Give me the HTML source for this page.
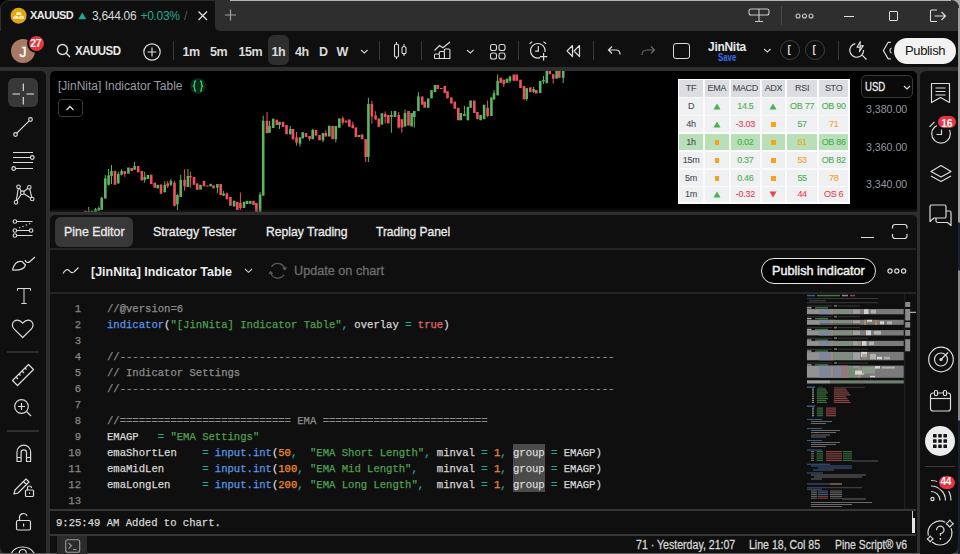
<!DOCTYPE html>
<html><head><meta charset="utf-8">
<style>
*{margin:0;padding:0;box-sizing:border-box}
html,body{width:960px;height:554px;overflow:hidden;background:#2e2e2e;font-family:"Liberation Sans",sans-serif;color:#dbdbdb}
.a{position:absolute}
.t{position:absolute;white-space:nowrap;line-height:1}
svg{position:absolute;overflow:visible}
.mono{font-family:"Liberation Mono",monospace}
</style></head><body>
<!-- tab bar -->
<div class="a" style="left:940px;top:0;width:20px;height:20px;background:#a8a8a8"></div>
<div class="a" style="left:0;top:0;width:958.5px;height:31px;background:#2e2e2e;border-top-right-radius:8px"></div>
<div class="a" style="left:81px;top:0;width:870px;height:1px;background:#b5b5b5"></div>
<div class="a" style="left:0;top:0;width:10px;height:10px;background:#050505"></div>
<div class="a" style="left:0;top:0;width:230px;height:31px;background:#2e2e2e;border-top-left-radius:9px"></div>
<div class="a" style="left:0;top:1px;width:230px;height:30px;background:#0f0f0f;border-top-left-radius:8px;left:1px;width:229px"></div>
<div class="a" style="left:215px;top:1px;width:743.5px;height:29.6px;background:#2e2e2e;border-bottom-left-radius:5px;border-top-right-radius:7px"></div>
<!-- toolbar -->
<div class="a" style="left:0;top:31px;width:958.5px;height:36px;background:#0f0f0f"></div>

<!-- TAB CONTENT -->
<svg width="18" height="18" style="left:10px;top:7px" viewBox="0 0 18 18"><circle cx="8.6" cy="8.7" r="8" fill="#e2a40f"/><path d="M5.6 8 L6.9 5 H10.4 L11.7 8Z M2.9 11.8 L4.2 8.8 H7.7 L9 11.8Z M8.4 11.8 L9.7 8.8 H13.2 L14.5 11.8Z" fill="#fff0b8"/></svg>
<div class="t" style="left:30px;top:10px;font-size:11.5px;font-weight:bold;color:#e8e8e8;letter-spacing:-0.5px;transform:scaleX(0.95);transform-origin:0 0">XAUUSD</div>
<svg width="10" height="8" style="left:78px;top:12px" viewBox="0 0 10 8"><path d="M0.3 7.2 L4.3 0.4 L8.3 7.2Z" fill="#22ab94"/></svg>
<div class="t" style="left:92px;top:10px;font-size:12px;color:#dbdbdb;letter-spacing:-0.3px">3,644.06</div>
<div class="t" style="left:140.5px;top:10px;font-size:12px;color:#22ab94;letter-spacing:-0.3px">+0.03%</div>
<div class="t" style="left:184px;top:10px;font-size:12px;color:#555">/</div>
<svg width="12" height="12" style="left:197px;top:10px" viewBox="0 0 12 12"><path d="M1.5 1.5 L10 10 M10 1.5 L1.5 10" stroke="#e0e0e0" stroke-width="1.3"/></svg>
<svg width="14" height="14" style="left:224px;top:8px" viewBox="0 0 14 14"><path d="M6.5 1.5 V12.5 M1 7 H12" stroke="#a0a0a0" stroke-width="1.2"/></svg>
<!-- tab right icons -->
<svg width="24" height="16" style="left:748px;top:8px" viewBox="0 0 24 16"><rect x="1" y="1" width="20" height="6" rx="2" fill="none" stroke="#c8c8c8" stroke-width="1.1"/><path d="M11 1 V13 M7 13.5 H15" stroke="#c8c8c8" stroke-width="1.1"/></svg>
<div class="a" style="left:781px;top:6px;width:1px;height:19px;background:#4a4a4a"></div>
<svg width="20" height="6" style="left:795px;top:13px" viewBox="0 0 20 6"><circle cx="3" cy="3" r="2" fill="none" stroke="#c8c8c8" stroke-width="1.1"/><circle cx="9.5" cy="3" r="2" fill="none" stroke="#c8c8c8" stroke-width="1.1"/><circle cx="16" cy="3" r="2" fill="none" stroke="#c8c8c8" stroke-width="1.1"/></svg>
<div class="a" style="left:844px;top:16px;width:10px;height:1.2px;background:#e0e0e0"></div>
<div class="a" style="left:888.5px;top:11px;width:9.5px;height:9.5px;border:1.2px solid #e0e0e0;border-radius:1px"></div>
<svg width="18" height="14" style="left:929px;top:9px" viewBox="0 0 18 14"><path d="M8 1 H2.5 A1 1 0 0 0 1.5 2 V11.5 A1 1 0 0 0 2.5 12.5 H8 M5.5 7 H16.5 M12.5 3 L16.5 7 L12.5 11" fill="none" stroke="#e0e0e0" stroke-width="1.1"/></svg>

<!-- TOOLBAR -->
<div class="a" style="left:11px;top:38.5px;width:24px;height:24px;border-radius:50%;background:#a87a63"></div>
<div class="t" style="left:19.5px;top:44.5px;font-size:14px;color:#fff;-webkit-text-stroke:0.4px #fff">J</div>
<div class="a" style="left:26.5px;top:33.5px;width:19.5px;height:19.5px;border-radius:50%;background:#e8343f;border:2px solid #0f0f0f"></div>
<div class="t" style="left:30.3px;top:38.3px;font-size:10.5px;font-weight:bold;color:#fff;letter-spacing:-0.4px">27</div>
<svg width="16" height="16" style="left:56px;top:43px" viewBox="0 0 16 16"><circle cx="6.5" cy="6.5" r="5" fill="none" stroke="#dbdbdb" stroke-width="1.4"/><path d="M10 10 L14 14" stroke="#dbdbdb" stroke-width="1.4"/></svg>
<div class="t" style="left:74.5px;top:45px;font-size:12.5px;font-weight:bold;color:#e8e8e8;letter-spacing:-0.55px;transform:scaleX(0.92);transform-origin:0 0">XAUUSD</div>
<svg width="20" height="20" style="left:141.5px;top:41.5px" viewBox="0 0 20 20"><circle cx="10" cy="10" r="8.2" fill="none" stroke="#dbdbdb" stroke-width="1.2"/><path d="M10 5.5 V14.5 M5.5 10 H14.5" stroke="#dbdbdb" stroke-width="1.2"/></svg>
<div class="a" style="left:173px;top:41px;width:1px;height:19px;background:#3a3a3a"></div>
<div class="a" style="left:267.5px;top:35px;width:21px;height:30px;border-radius:6px;background:#2e2e2e"></div>
<div class="t" style="left:182.5px;top:45.5px;font-size:12.5px;font-weight:bold;color:#dbdbdb;letter-spacing:-0.5px">1m</div>
<div class="t" style="left:210px;top:45.5px;font-size:12.5px;font-weight:bold;color:#dbdbdb;letter-spacing:-0.5px">5m</div>
<div class="t" style="left:238.5px;top:45.5px;font-size:12.5px;font-weight:bold;color:#dbdbdb;letter-spacing:-0.5px">15m</div>
<div class="t" style="left:271.5px;top:45.5px;font-size:12.5px;font-weight:bold;color:#dbdbdb;letter-spacing:-0.5px">1h</div>
<div class="t" style="left:295px;top:45.5px;font-size:12.5px;font-weight:bold;color:#dbdbdb;letter-spacing:-0.5px">4h</div>
<div class="t" style="left:319px;top:45.5px;font-size:12.5px;font-weight:bold;color:#dbdbdb;letter-spacing:-0.5px">D</div>
<div class="t" style="left:336.5px;top:45.5px;font-size:12.5px;font-weight:bold;color:#dbdbdb;letter-spacing:-0.5px">W</div>
<svg width="10" height="6" style="left:360px;top:49px" viewBox="0 0 10 6"><path d="M1 1 L4.3 4 L7.6 1" fill="none" stroke="#d0d0d0" stroke-width="1.1"/></svg>
<div class="a" style="left:379px;top:41px;width:1px;height:19px;background:#3a3a3a"></div>
<svg width="16" height="20" style="left:392px;top:41px" viewBox="0 0 16 20"><path d="M4.5 1 V18 M12 3 V15" stroke="#dbdbdb" stroke-width="1.1"/><rect x="2.5" y="3.2" width="4" height="12.8" rx="1.2" fill="#0f0f0f" stroke="#dbdbdb" stroke-width="1.1"/><rect x="10" y="5.8" width="4" height="6.8" rx="1.2" fill="#0f0f0f" stroke="#dbdbdb" stroke-width="1.1"/></svg>
<div class="a" style="left:420.5px;top:41px;width:1px;height:19px;background:#3a3a3a"></div>
<svg width="20" height="20" style="left:433px;top:41px" viewBox="0 0 20 20"><path d="M1.5 9.5 L6.5 4.5 L10 6.8 L17 1" fill="none" stroke="#dbdbdb" stroke-width="1.2"/><path d="M1.5 17.5 V14 Q1.5 13 2.5 13 H5.5 Q6.4 13 6.4 14 V17.5 M6.4 13 V11.5 Q6.4 10.5 7.4 10.5 H10.4 Q11.4 10.5 11.4 11.5 V17.5 M11.4 10.5 V9 Q11.4 8 12.4 8 H15.9 Q16.9 8 16.9 9 V17.5 H1.5" fill="none" stroke="#dbdbdb" stroke-width="1.1" stroke-linejoin="round"/></svg>
<svg width="10" height="6" style="left:465.5px;top:49px" viewBox="0 0 10 6"><path d="M1 1 L4.3 4 L7.6 1" fill="none" stroke="#d0d0d0" stroke-width="1.1"/></svg>
<svg width="18" height="18" style="left:488.5px;top:42.5px" viewBox="0 0 18 18"><rect x="1.5" y="1.5" width="6" height="6" rx="2" fill="none" stroke="#dbdbdb" stroke-width="1.1"/><rect x="10" y="1.5" width="6" height="6" rx="2" fill="none" stroke="#dbdbdb" stroke-width="1.1"/><rect x="1.5" y="10" width="6" height="6" rx="2" fill="none" stroke="#dbdbdb" stroke-width="1.1"/><rect x="10" y="10" width="6" height="6" rx="2" fill="none" stroke="#dbdbdb" stroke-width="1.1"/></svg>
<div class="a" style="left:517.5px;top:41px;width:1px;height:19px;background:#3a3a3a"></div>
<svg width="22" height="22" style="left:528px;top:40px" viewBox="0 0 22 22"><circle cx="9.8" cy="10.8" r="7.3" fill="none" stroke="#dbdbdb" stroke-width="1.2"/><path d="M10.3 6 V11.2 H7.2 M1.6 3.8 L4.2 1.6 M18 3.8 L15.4 1.6" fill="none" stroke="#dbdbdb" stroke-width="1.2"/><rect x="12" y="12" width="10" height="10" fill="#0f0f0f"/><path d="M15.6 13 V20.4 M11.9 16.7 H19.3" stroke="#dbdbdb" stroke-width="1.2"/></svg>
<svg width="16" height="14" style="left:564.8px;top:44px" viewBox="0 0 16 14"><path d="M7.5 1.5 L2 7 L7.5 12.5Z M14.5 1.5 L9 7 L14.5 12.5Z" fill="none" stroke="#dbdbdb" stroke-width="1.2" stroke-linejoin="round"/></svg>
<div class="a" style="left:592.8px;top:41px;width:1px;height:19px;background:#3a3a3a"></div>
<svg width="16" height="12" style="left:606.5px;top:45px" viewBox="0 0 16 12"><path d="M5 1.5 L1.5 5 L5 8.5 M1.5 5 H9 C11.5 5 13 7 13 9.5" fill="none" stroke="#dbdbdb" stroke-width="1.2"/></svg>
<svg width="16" height="12" style="left:639.5px;top:45px" viewBox="0 0 16 12"><path d="M11 1.5 L14.5 5 L11 8.5 M14.5 5 H6.5 C3.5 5 2 7 2 10" fill="none" stroke="#6a6a6a" stroke-width="1.2"/></svg>
<div class="a" style="left:672.5px;top:43px;width:17px;height:15.5px;border:1.4px solid #dbdbdb;border-radius:3px"></div>
<div class="t" style="left:707.9px;top:40.5px;font-size:12.5px;font-weight:bold;color:#e8e8e8;letter-spacing:-0.3px;transform:scaleX(0.96);transform-origin:0 0">JinNita</div>
<div class="t" style="left:717.7px;top:52.6px;font-size:10px;font-weight:bold;color:#3b6cf0;transform:scaleX(0.78);transform-origin:0 0">Save</div>
<svg width="10" height="6" style="left:763px;top:48.3px" viewBox="0 0 10 6"><path d="M1 1 L4.3 4 L7.6 1" fill="none" stroke="#d0d0d0" stroke-width="1.1"/></svg>
<div class="a" style="left:780px;top:40px;width:20px;height:20px;border-radius:50%;border:1.2px solid #3e3e3e"></div>
<div class="t" style="left:787.5px;top:45px;font-size:10px;font-weight:bold;color:#e6dcd0">[</div>
<div class="a" style="left:805px;top:40px;width:20px;height:20px;border-radius:50%;border:1.2px solid #3e3e3e"></div>
<div class="t" style="left:812.5px;top:45px;font-size:10px;font-weight:bold;color:#e6dcd0">[</div>
<div class="a" style="left:838px;top:41px;width:1px;height:19px;background:#3a3a3a"></div>
<svg width="20" height="20" style="left:849px;top:40px" viewBox="0 0 20 20"><path d="M6.3 3.6 A6.9 6.9 0 1 0 14.6 10" fill="none" stroke="#dbdbdb" stroke-width="1.2"/><path d="M12.8 14.8 L17.5 19.5" stroke="#dbdbdb" stroke-width="1.2"/><path d="M11.3 1.5 L8 7.3 L11.4 6.9 L10.4 11.6 L14.3 5.6 L11 6 Z" fill="none" stroke="#dbdbdb" stroke-width="1.1" stroke-linejoin="round"/></svg>
<svg width="12" height="20" style="left:882px;top:40px" viewBox="0 0 12 20"><path d="M8.8 2.3 H6.2 L1.4 10.5 L6.2 18.9 H8.8" fill="none" stroke="#dbdbdb" stroke-width="1.2"/><path d="M9.5 8 A2.8 2.8 0 0 0 9.5 13" fill="none" stroke="#dbdbdb" stroke-width="1.2"/></svg>
<div class="a" style="left:894.3px;top:38px;width:61.5px;height:25.5px;border-radius:13px;background:#f2f2f2"></div>
<div class="t" style="left:905px;top:44px;font-size:13px;color:#131313;letter-spacing:-0.35px">Publish</div>

<!-- left toolbar -->
<div class="a" style="left:0;top:71px;width:46px;height:483px;background:#0f0f0f;border-top-right-radius:5px;border-bottom-left-radius:8px"></div>

<!-- LEFT TOOLBAR ICONS -->
<div class="a" style="left:8px;top:78px;width:30px;height:29px;border-radius:6px;background:#383838"></div>
<svg width="24" height="24" style="left:11px;top:81.5px" viewBox="0 0 24 24"><path d="M12.3 1.5 V9 M12.3 15 V22.5 M1.5 12 H9 M15.5 12 H23" stroke="#e6e6e6" stroke-width="1.1" fill="none"/></svg>
<svg width="22" height="22" style="left:12px;top:115.5px" viewBox="0 0 22 22"><path d="M4.8 17.2 L17.2 4.8" stroke="#dbdbdb" stroke-width="1.2" fill="none"/><circle cx="3.5" cy="18.5" r="1.8" stroke="#dbdbdb" stroke-width="1.2" fill="none"/><circle cx="18.5" cy="3.5" r="1.8" stroke="#dbdbdb" stroke-width="1.2" fill="none"/></svg>
<svg width="24" height="22" style="left:11px;top:150px" viewBox="0 0 24 22"><path d="M2 2.5 H22 M2 7.5 H19.5 M2 12.5 H22 M4.5 18.5 H22" stroke="#dbdbdb" stroke-width="1" fill="none"/><circle cx="21.3" cy="7.5" r="1.8" stroke="#dbdbdb" stroke-width="1.2" fill="none"/><circle cx="2.7" cy="18.5" r="1.8" stroke="#dbdbdb" stroke-width="1.2" fill="none"/></svg>
<svg width="24" height="24" style="left:11.5px;top:182px" viewBox="0 0 24 24"><path d="M6.5 4.8 L4 20.3 M6.5 4.8 L10.3 10.7 M10.3 10.7 L17.3 5.3 M17.3 5.3 L20.2 17 M10.3 10.7 L20.2 17 M10.3 10.7 L4 20.3" stroke="#dbdbdb" stroke-width="1.1" fill="none"/><circle cx="6.5" cy="4.8" r="1.8" fill="#0f0f0f" stroke="#dbdbdb" stroke-width="1.1"/><circle cx="17.3" cy="5.3" r="1.8" fill="#0f0f0f" stroke="#dbdbdb" stroke-width="1.1"/><circle cx="10.3" cy="10.7" r="1.8" fill="#0f0f0f" stroke="#dbdbdb" stroke-width="1.1"/><circle cx="4" cy="20.3" r="1.8" fill="#0f0f0f" stroke="#dbdbdb" stroke-width="1.1"/><circle cx="20.2" cy="17" r="1.8" fill="#0f0f0f" stroke="#dbdbdb" stroke-width="1.1"/></svg>
<svg width="24" height="22" style="left:10.5px;top:217px" viewBox="0 0 24 22"><path d="M5.5 4.5 H21.5 M5.5 13.5 H18.5 M5.5 18.5 H21.5" stroke="#dbdbdb" stroke-width="1" fill="none"/><path d="M8 11 L21 5.8" stroke="#dbdbdb" stroke-width="1.1" stroke-dasharray="1.4 2.2"/><circle cx="3.9" cy="4.5" r="1.8" fill="#0f0f0f" stroke="#dbdbdb" stroke-width="1.1"/><circle cx="3.9" cy="13.5" r="1.8" fill="#0f0f0f" stroke="#dbdbdb" stroke-width="1.1"/><circle cx="3.9" cy="18.5" r="1.8" fill="#0f0f0f" stroke="#dbdbdb" stroke-width="1.1"/><circle cx="20.1" cy="13.5" r="1.8" fill="#0f0f0f" stroke="#dbdbdb" stroke-width="1.1"/></svg>
<svg width="26" height="18" style="left:11px;top:254px" viewBox="0 0 26 18"><path d="M1.5 16 C3 10 6 6.5 11 7.5 L14.5 11 C13 15.5 8 16.5 1.5 16Z M14 6 C15 9 17.5 9 19 7.5 L24 3" stroke="#dbdbdb" stroke-width="1.2" fill="none" stroke-linejoin="round"/></svg>
<svg width="18" height="18" style="left:14.5px;top:287px" viewBox="0 0 18 18"><path d="M2.5 3.8 V1.5 H15.5 V3.8 M9 1.5 V16.5 M6.3 16.5 H11.7" stroke="#dbdbdb" stroke-width="1" fill="none"/></svg>
<svg width="24" height="20" style="left:11px;top:319px" viewBox="0 0 24 20"><path d="M11.7 18.5 L3 9.8 C0.5 7.2 1 3.5 3.5 2 C6 0.5 9 1.2 11.7 4.2 C14.4 1.2 17.4 0.5 19.9 2 C22.4 3.5 22.9 7.2 20.4 9.8Z" stroke="#dbdbdb" stroke-width="1.2" fill="none" stroke-linejoin="round"/></svg>
<div class="a" style="left:7px;top:351px;width:32px;height:1.5px;background:#2e2e2e"></div>
<svg width="24" height="24" style="left:11px;top:362.5px" viewBox="0 0 24 24"><path d="M1.5 17.5 L17.5 1.5 L22.5 6.5 L6.5 22.5Z M5 14 L7 16 M8 11 L9.5 12.5 M11 8 L13 10 M14 5 L15.5 6.5" stroke="#dbdbdb" stroke-width="1.2" fill="none" stroke-linejoin="round"/></svg>
<svg width="20" height="20" style="left:13px;top:398px" viewBox="0 0 20 20"><circle cx="8.5" cy="8.5" r="6.8" stroke="#dbdbdb" stroke-width="1.2" fill="none"/><path d="M13.5 13.5 L18 18 M8.5 5 V12 M5 8.5 H12" stroke="#dbdbdb" stroke-width="1.2" fill="none"/></svg>
<div class="a" style="left:7px;top:430px;width:32px;height:1.5px;background:#2e2e2e"></div>
<svg width="20" height="22" style="left:14.5px;top:443px" viewBox="0 0 20 22"><path d="M2 18.5 V9 A6.8 6.8 0 0 1 15.6 9 V18.5 H11.5 V9.5 A2.7 2.7 0 0 0 6.1 9.5 V18.5Z M2 14.5 H6 M11.5 14.5 H15.6" stroke="#dbdbdb" stroke-width="1.2" fill="none" stroke-linejoin="round"/></svg>
<svg width="24" height="22" style="left:11.5px;top:476.5px" viewBox="0 0 24 22"><path d="M2 17 L3 13 L14 2 L17 5 L6 16Z M11.5 4.5 L14.5 7.5" stroke="#dbdbdb" stroke-width="1.2" fill="none" stroke-linejoin="round"/><rect x="13.5" y="13" width="8" height="6.5" rx="1" stroke="#dbdbdb" stroke-width="1.2" fill="none"/><path d="M15.5 13 V11 A2 2 0 0 1 19.5 11" stroke="#dbdbdb" stroke-width="1.2" fill="none"/><rect x="17" y="15.5" width="1" height="1.5" fill="#dbdbdb"/></svg>
<svg width="20" height="20" style="left:14.5px;top:511.5px" viewBox="0 0 20 20"><rect x="1.5" y="8.5" width="14" height="9.5" rx="1.5" stroke="#dbdbdb" stroke-width="1.2" fill="none"/><path d="M4.5 8.5 V5.5 A4 4 0 0 1 12.2 4" stroke="#dbdbdb" stroke-width="1.2" fill="none"/><rect x="8" y="11.5" width="1.2" height="3" fill="#dbdbdb"/></svg>
<svg width="26" height="14" style="left:10px;top:543px" viewBox="0 0 26 14"><path d="M1.5 10 C6 2 19 2 24 10 C19 18 6 18 1.5 10Z" stroke="#dbdbdb" stroke-width="1.2" fill="none"/><circle cx="12.8" cy="10" r="3.5" stroke="#dbdbdb" stroke-width="1.2" fill="none"/></svg>

<!-- chart -->
<div class="a" style="left:50px;top:71px;width:866.5px;height:141px;background:#000;border-top-left-radius:5px;border-top-right-radius:5px;overflow:hidden">
<svg width="866" height="143" style="left:0;top:0"><rect x="34.2" y="139.8" width="2.6" height="2.9" fill="#ef5060"/><rect x="38.2" y="135.9" width="1" height="6.8" fill="#5cb55f"/><rect x="37.4" y="140.5" width="2.6" height="2.2" fill="#5cb55f"/><rect x="40.7" y="139.8" width="2.6" height="2.9" fill="#5cb55f"/><rect x="45.0" y="137.0" width="1" height="5.0" fill="#5cb55f"/><rect x="44.2" y="138.0" width="2.6" height="4.0" fill="#5cb55f"/><rect x="48.3" y="135.5" width="1" height="4.3" fill="#5cb55f"/><rect x="47.5" y="137.0" width="2.6" height="2.8" fill="#5cb55f"/><rect x="51.2" y="126.0" width="1" height="13.0" fill="#5cb55f"/><rect x="50.4" y="126.8" width="2.6" height="12.2" fill="#5cb55f"/><rect x="54.8" y="103.7" width="1" height="23.8" fill="#5cb55f"/><rect x="54.0" y="107.3" width="2.6" height="20.2" fill="#5cb55f"/><rect x="58.1" y="98.0" width="1" height="16.5" fill="#5cb55f"/><rect x="57.3" y="104.4" width="2.6" height="9.4" fill="#5cb55f"/><rect x="61.0" y="94.0" width="1" height="19.0" fill="#5cb55f"/><rect x="60.2" y="100.0" width="2.6" height="5.0" fill="#5cb55f"/><rect x="63.7" y="99.8" width="2.6" height="14.0" fill="#ef5060"/><rect x="67.8" y="100.8" width="1" height="12.0" fill="#5cb55f"/><rect x="67.0" y="103.0" width="2.6" height="9.4" fill="#5cb55f"/><rect x="71.1" y="98.0" width="1" height="6.4" fill="#5cb55f"/><rect x="70.3" y="100.0" width="2.6" height="3.7" fill="#5cb55f"/><rect x="74.3" y="100.0" width="1" height="5.9" fill="#ef5060"/><rect x="73.5" y="100.0" width="2.6" height="3.0" fill="#ef5060"/><rect x="77.1" y="96.5" width="2.6" height="6.2" fill="#5cb55f"/><rect x="80.4" y="97.0" width="2.6" height="3.0" fill="#ef5060"/><rect x="84.1" y="90.7" width="1" height="8.0" fill="#5cb55f"/><rect x="83.3" y="95.0" width="2.6" height="3.7" fill="#5cb55f"/><rect x="86.9" y="95.0" width="2.6" height="6.3" fill="#ef5060"/><rect x="90.5" y="100.0" width="2.6" height="9.5" fill="#ef5060"/><rect x="94.2" y="100.8" width="1" height="10.9" fill="#5cb55f"/><rect x="93.4" y="105.9" width="2.6" height="2.9" fill="#5cb55f"/><rect x="96.6" y="104.0" width="2.6" height="4.0" fill="#5cb55f"/><rect x="99.9" y="103.7" width="2.6" height="9.3" fill="#ef5060"/><rect x="103.4" y="111.7" width="2.6" height="5.0" fill="#ef5060"/><rect x="106.4" y="113.8" width="2.6" height="3.6" fill="#5cb55f"/><rect x="110.5" y="113.0" width="1" height="10.2" fill="#ef5060"/><rect x="109.7" y="113.8" width="2.6" height="8.7" fill="#ef5060"/><rect x="114.3" y="110.2" width="1" height="11.6" fill="#5cb55f"/><rect x="113.5" y="113.8" width="2.6" height="7.2" fill="#5cb55f"/><rect x="117.2" y="110.0" width="1" height="7.0" fill="#ef5060"/><rect x="116.4" y="112.4" width="2.6" height="2.9" fill="#ef5060"/><rect x="120.4" y="108.0" width="1" height="7.0" fill="#5cb55f"/><rect x="119.6" y="109.9" width="2.6" height="3.9" fill="#5cb55f"/><rect x="124.0" y="110.2" width="1" height="25.3" fill="#ef5060"/><rect x="123.2" y="111.7" width="2.6" height="23.1" fill="#ef5060"/><rect x="126.9" y="123.2" width="1" height="15.8" fill="#5cb55f"/><rect x="126.1" y="124.0" width="2.6" height="9.3" fill="#5cb55f"/><rect x="130.2" y="104.0" width="1" height="22.0" fill="#5cb55f"/><rect x="129.4" y="109.0" width="2.6" height="17.0" fill="#5cb55f"/><rect x="134.1" y="98.4" width="1" height="21.2" fill="#ef5060"/><rect x="133.3" y="108.8" width="2.6" height="6.5" fill="#ef5060"/><rect x="137.4" y="98.0" width="1" height="18.0" fill="#5cb55f"/><rect x="136.6" y="105.0" width="2.6" height="11.0" fill="#5cb55f"/><rect x="139.9" y="100.8" width="1" height="15.9" fill="#ef5060"/><rect x="139.1" y="105.0" width="2.6" height="1.6" fill="#ef5060"/><rect x="142.7" y="105.9" width="2.6" height="7.9" fill="#ef5060"/><rect x="145.9" y="112.4" width="2.6" height="6.5" fill="#ef5060"/><rect x="149.2" y="113.8" width="2.6" height="4.8" fill="#5cb55f"/><rect x="152.7" y="109.9" width="2.6" height="5.4" fill="#ef5060"/><rect x="156.0" y="114.5" width="2.6" height="1.1" fill="#ef5060"/><rect x="159.3" y="112.8" width="2.6" height="2.5" fill="#5cb55f"/><rect x="162.2" y="114.3" width="2.6" height="3.1" fill="#ef5060"/><rect x="166.9" y="113.0" width="1" height="9.0" fill="#5cb55f"/><rect x="166.1" y="113.0" width="2.6" height="3.7" fill="#5cb55f"/><rect x="169.4" y="113.0" width="2.6" height="11.0" fill="#ef5060"/><rect x="173.1" y="120.0" width="1" height="5.0" fill="#5cb55f"/><rect x="172.3" y="122.5" width="2.6" height="2.1" fill="#5cb55f"/><rect x="176.4" y="121.5" width="1" height="6.8" fill="#ef5060"/><rect x="175.6" y="122.5" width="2.6" height="5.8" fill="#ef5060"/><rect x="179.1" y="126.0" width="2.6" height="8.8" fill="#ef5060"/><rect x="182.8" y="129.7" width="2.6" height="5.8" fill="#5cb55f"/><rect x="186.0" y="130.8" width="2.6" height="8.2" fill="#ef5060"/><rect x="189.9" y="121.5" width="1" height="17.5" fill="#ef5060"/><rect x="189.1" y="131.9" width="2.6" height="5.1" fill="#ef5060"/><rect x="192.7" y="130.8" width="2.6" height="6.2" fill="#5cb55f"/><rect x="195.7" y="129.8" width="2.6" height="3.2" fill="#5cb55f"/><rect x="198.9" y="129.8" width="2.6" height="3.1" fill="#5cb55f"/><rect x="202.2" y="129.8" width="2.6" height="4.2" fill="#ef5060"/><rect x="205.1" y="131.9" width="2.6" height="10.3" fill="#ef5060"/><rect x="209.6" y="121.0" width="1" height="21.2" fill="#5cb55f"/><rect x="208.8" y="123.5" width="2.6" height="18.7" fill="#5cb55f"/><rect x="212.7" y="44.6" width="1" height="80.0" fill="#5cb55f"/><rect x="211.9" y="49.8" width="2.6" height="74.8" fill="#5cb55f"/><rect x="216.5" y="41.0" width="1" height="21.2" fill="#ef5060"/><rect x="215.7" y="49.8" width="2.6" height="12.4" fill="#ef5060"/><rect x="219.0" y="49.8" width="1" height="12.0" fill="#5cb55f"/><rect x="218.2" y="55.0" width="2.6" height="6.8" fill="#5cb55f"/><rect x="221.9" y="47.7" width="2.6" height="9.3" fill="#5cb55f"/><rect x="225.5" y="48.7" width="2.6" height="5.3" fill="#ef5060"/><rect x="229.0" y="50.8" width="1" height="7.2" fill="#5cb55f"/><rect x="228.2" y="50.8" width="2.6" height="3.2" fill="#5cb55f"/><rect x="231.7" y="50.8" width="2.6" height="5.2" fill="#ef5060"/><rect x="235.2" y="54.0" width="2.6" height="9.3" fill="#ef5060"/><rect x="239.8" y="55.0" width="1" height="8.3" fill="#5cb55f"/><rect x="239.0" y="58.0" width="2.6" height="5.3" fill="#5cb55f"/><rect x="241.7" y="58.0" width="2.6" height="10.5" fill="#ef5060"/><rect x="246.0" y="61.0" width="1" height="13.6" fill="#ef5060"/><rect x="245.2" y="66.4" width="2.6" height="5.2" fill="#ef5060"/><rect x="249.5" y="66.4" width="1" height="9.3" fill="#5cb55f"/><rect x="248.7" y="66.4" width="2.6" height="6.2" fill="#5cb55f"/><rect x="251.4" y="61.2" width="2.6" height="6.2" fill="#5cb55f"/><rect x="254.7" y="62.0" width="2.6" height="4.0" fill="#ef5060"/><rect x="259.1" y="65.0" width="1" height="5.0" fill="#ef5060"/><rect x="258.3" y="65.0" width="2.6" height="3.0" fill="#ef5060"/><rect x="262.2" y="57.8" width="1" height="10.4" fill="#5cb55f"/><rect x="261.4" y="58.9" width="2.6" height="9.3" fill="#5cb55f"/><rect x="264.7" y="58.9" width="2.6" height="5.8" fill="#ef5060"/><rect x="268.2" y="64.0" width="2.6" height="5.3" fill="#ef5060"/><rect x="272.5" y="62.0" width="1" height="9.3" fill="#5cb55f"/><rect x="271.7" y="62.0" width="2.6" height="7.3" fill="#5cb55f"/><rect x="275.3" y="59.3" width="1" height="6.2" fill="#ef5060"/><rect x="274.5" y="62.0" width="2.6" height="3.5" fill="#ef5060"/><rect x="278.0" y="54.7" width="2.6" height="10.8" fill="#5cb55f"/><rect x="281.3" y="55.0" width="2.6" height="13.2" fill="#ef5060"/><rect x="285.3" y="55.0" width="1" height="16.3" fill="#5cb55f"/><rect x="284.5" y="55.0" width="2.6" height="13.2" fill="#5cb55f"/><rect x="288.0" y="47.4" width="2.6" height="9.4" fill="#5cb55f"/><rect x="292.3" y="45.4" width="1" height="8.3" fill="#ef5060"/><rect x="291.5" y="47.4" width="2.6" height="4.2" fill="#ef5060"/><rect x="294.8" y="49.5" width="2.6" height="2.1" fill="#ef5060"/><rect x="298.0" y="48.5" width="2.6" height="7.3" fill="#ef5060"/><rect x="302.3" y="50.6" width="1" height="6.6" fill="#ef5060"/><rect x="301.5" y="53.7" width="2.6" height="3.5" fill="#ef5060"/><rect x="304.6" y="56.4" width="2.6" height="9.7" fill="#ef5060"/><rect x="307.7" y="64.0" width="2.6" height="2.0" fill="#5cb55f"/><rect x="310.8" y="63.4" width="2.6" height="4.8" fill="#ef5060"/><rect x="315.2" y="68.2" width="1" height="22.8" fill="#ef5060"/><rect x="314.4" y="68.2" width="2.6" height="17.7" fill="#ef5060"/><rect x="317.9" y="26.7" width="1" height="64.3" fill="#5cb55f"/><rect x="317.1" y="32.9" width="2.6" height="53.0" fill="#5cb55f"/><rect x="321.4" y="29.8" width="1" height="22.8" fill="#ef5060"/><rect x="320.6" y="32.9" width="2.6" height="12.5" fill="#ef5060"/><rect x="325.1" y="40.2" width="1" height="8.3" fill="#ef5060"/><rect x="324.3" y="44.3" width="2.6" height="4.2" fill="#ef5060"/><rect x="327.5" y="47.4" width="2.6" height="8.4" fill="#ef5060"/><rect x="330.6" y="42.2" width="2.6" height="11.5" fill="#5cb55f"/><rect x="334.7" y="40.5" width="1" height="11.9" fill="#ef5060"/><rect x="333.9" y="43.0" width="2.6" height="3.0" fill="#ef5060"/><rect x="337.0" y="44.0" width="2.6" height="8.4" fill="#ef5060"/><rect x="340.9" y="40.0" width="1" height="21.7" fill="#5cb55f"/><rect x="340.1" y="44.0" width="2.6" height="2.0" fill="#5cb55f"/><rect x="343.7" y="40.0" width="2.6" height="6.0" fill="#5cb55f"/><rect x="348.2" y="41.0" width="1" height="16.6" fill="#ef5060"/><rect x="347.4" y="44.0" width="2.6" height="12.5" fill="#ef5060"/><rect x="351.3" y="48.2" width="1" height="13.5" fill="#ef5060"/><rect x="350.5" y="48.2" width="2.6" height="8.3" fill="#ef5060"/><rect x="354.5" y="38.5" width="1" height="17.0" fill="#5cb55f"/><rect x="353.7" y="42.0" width="2.6" height="13.5" fill="#5cb55f"/><rect x="357.2" y="40.0" width="2.6" height="14.5" fill="#ef5060"/><rect x="360.3" y="42.0" width="2.6" height="13.5" fill="#5cb55f"/><rect x="363.8" y="40.0" width="1" height="16.5" fill="#5cb55f"/><rect x="363.0" y="40.0" width="2.6" height="6.0" fill="#5cb55f"/><rect x="367.9" y="21.2" width="1" height="18.8" fill="#5cb55f"/><rect x="367.1" y="25.4" width="2.6" height="14.6" fill="#5cb55f"/><rect x="370.9" y="25.4" width="2.6" height="8.3" fill="#ef5060"/><rect x="373.4" y="30.6" width="2.6" height="6.2" fill="#ef5060"/><rect x="376.9" y="27.4" width="2.6" height="9.4" fill="#5cb55f"/><rect x="380.2" y="19.1" width="2.6" height="8.3" fill="#5cb55f"/><rect x="383.7" y="14.0" width="2.6" height="7.2" fill="#5cb55f"/><rect x="386.5" y="14.0" width="2.6" height="4.0" fill="#ef5060"/><rect x="390.0" y="17.0" width="2.6" height="1.0" fill="#ef5060"/><rect x="393.5" y="15.0" width="2.6" height="7.2" fill="#ef5060"/><rect x="396.2" y="20.2" width="2.6" height="7.2" fill="#ef5060"/><rect x="400.0" y="26.4" width="2.6" height="6.2" fill="#ef5060"/><rect x="403.5" y="30.6" width="2.6" height="7.2" fill="#ef5060"/><rect x="407.0" y="36.8" width="2.6" height="12.5" fill="#ef5060"/><rect x="409.5" y="42.0" width="2.6" height="7.3" fill="#5cb55f"/><rect x="413.9" y="34.7" width="1" height="10.3" fill="#5cb55f"/><rect x="413.1" y="43.0" width="2.6" height="2.0" fill="#5cb55f"/><rect x="416.6" y="35.8" width="2.6" height="13.5" fill="#5cb55f"/><rect x="419.3" y="29.5" width="2.6" height="7.3" fill="#5cb55f"/><rect x="423.0" y="29.5" width="2.6" height="12.5" fill="#ef5060"/><rect x="426.1" y="41.0" width="2.6" height="7.2" fill="#ef5060"/><rect x="429.3" y="44.0" width="2.6" height="5.3" fill="#5cb55f"/><rect x="432.8" y="33.7" width="2.6" height="14.5" fill="#5cb55f"/><rect x="437.1" y="29.5" width="1" height="16.5" fill="#ef5060"/><rect x="436.3" y="36.8" width="2.6" height="8.2" fill="#ef5060"/><rect x="440.1" y="26.4" width="2.6" height="18.6" fill="#5cb55f"/><rect x="443.5" y="19.1" width="1" height="9.4" fill="#5cb55f"/><rect x="442.7" y="22.2" width="2.6" height="6.3" fill="#5cb55f"/><rect x="447.1" y="3.5" width="1" height="20.8" fill="#5cb55f"/><rect x="446.3" y="9.8" width="2.6" height="14.5" fill="#5cb55f"/><rect x="449.4" y="6.7" width="2.6" height="5.2" fill="#ef5060"/><rect x="453.3" y="8.7" width="1" height="7.3" fill="#ef5060"/><rect x="452.5" y="8.7" width="2.6" height="4.3" fill="#ef5060"/><rect x="455.7" y="7.7" width="2.6" height="4.2" fill="#5cb55f"/><rect x="459.5" y="4.6" width="1" height="7.3" fill="#5cb55f"/><rect x="458.7" y="5.6" width="2.6" height="4.2" fill="#5cb55f"/><rect x="462.5" y="3.5" width="2.6" height="6.3" fill="#ef5060"/><rect x="465.4" y="3.5" width="2.6" height="6.3" fill="#ef5060"/><rect x="469.2" y="8.7" width="2.6" height="8.3" fill="#ef5060"/><rect x="472.7" y="15.0" width="2.6" height="13.5" fill="#ef5060"/><rect x="476.2" y="17.2" width="1" height="12.6" fill="#5cb55f"/><rect x="475.4" y="17.2" width="2.6" height="10.8" fill="#5cb55f"/><rect x="479.0" y="16.3" width="2.6" height="4.9" fill="#ef5060"/><rect x="483.1" y="15.8" width="1" height="6.3" fill="#5cb55f"/><rect x="482.3" y="18.0" width="2.6" height="2.8" fill="#5cb55f"/><rect x="485.0" y="19.0" width="2.6" height="3.6" fill="#ef5060"/><rect x="488.9" y="10.0" width="2.6" height="12.1" fill="#5cb55f"/><rect x="493.0" y="5.0" width="1" height="8.0" fill="#5cb55f"/><rect x="492.2" y="9.0" width="2.6" height="1.4" fill="#5cb55f"/><rect x="495.5" y="0.0" width="2.6" height="12.2" fill="#5cb55f"/><rect x="498.5" y="0.0" width="2.6" height="3.2" fill="#ef5060"/><rect x="502.7" y="3.2" width="1" height="9.5" fill="#ef5060"/><rect x="501.9" y="3.2" width="2.6" height="4.5" fill="#ef5060"/><rect x="505.3" y="0.0" width="2.6" height="7.7" fill="#5cb55f"/><rect x="508.0" y="0.0" width="2.6" height="6.8" fill="#ef5060"/><rect x="512.7" y="0.0" width="1" height="12.2" fill="#5cb55f"/><rect x="511.9" y="0.0" width="2.6" height="6.8" fill="#5cb55f"/></svg>
<div class="a" style="left:0;top:137px;width:866.5px;height:4px;background:linear-gradient(to bottom, rgba(46,46,46,0), rgba(46,46,46,0.55))"></div>
</div>

<!-- CHART OVERLAYS -->
<div class="t" style="left:58px;top:80px;font-size:12px;color:#9a9ca4">[JinNita] Indicator Table</div>
<div class="a" style="left:190px;top:77.5px;width:16px;height:16px;border-radius:50%;background:#0d2818"></div>
<svg width="12" height="12" style="left:192px;top:79.5px" viewBox="0 0 12 12"><path d="M4 1 C2.5 1 2.6 2 2.6 3.5 C2.6 5 2.3 5.8 1 6 C2.3 6.2 2.6 7 2.6 8.5 C2.6 10 2.5 11 4 11 M8 1 C9.5 1 9.4 2 9.4 3.5 C9.4 5 9.7 5.8 11 6 C9.7 6.2 9.4 7 9.4 8.5 C9.4 10 9.5 11 8 11" fill="none" stroke="#2fcf6a" stroke-width="1.3"/></svg>
<div class="a" style="left:57.5px;top:98.5px;width:25.5px;height:18px;border:1px solid #3a3a3a;border-radius:4px;background:#000"></div>
<svg width="10" height="6" style="left:65px;top:105px" viewBox="0 0 10 6"><path d="M1.5 5 L5 1.5 L8.5 5" fill="none" stroke="#e0e0e0" stroke-width="1.3"/></svg>
<div class="a" style="left:677.5px;top:79px;width:172.3px;height:124.5px;background:#fbfbfb"></div>
<div class="a" style="left:678.8px;top:80.3px;width:24.5px;height:16.6px;background:#dcdde0;color:#4a4c55;font-size:9px;letter-spacing:-0.3px;-webkit-text-stroke:0.1px currentColor;line-height:16.6px;text-align:center;white-space:nowrap">TF</div>
<div class="a" style="left:704.6px;top:80.3px;width:24.6px;height:16.6px;background:#dcdde0;color:#4a4c55;font-size:9px;letter-spacing:-0.3px;-webkit-text-stroke:0.1px currentColor;line-height:16.6px;text-align:center;white-space:nowrap">EMA</div>
<div class="a" style="left:730.5px;top:80.3px;width:29.7px;height:16.6px;background:#dcdde0;color:#4a4c55;font-size:9px;letter-spacing:-0.3px;-webkit-text-stroke:0.1px currentColor;line-height:16.6px;text-align:center;white-space:nowrap">MACD</div>
<div class="a" style="left:761.5px;top:80.3px;width:23.9px;height:16.6px;background:#dcdde0;color:#4a4c55;font-size:9px;letter-spacing:-0.3px;-webkit-text-stroke:0.1px currentColor;line-height:16.6px;text-align:center;white-space:nowrap">ADX</div>
<div class="a" style="left:786.7px;top:80.3px;width:30.8px;height:16.6px;background:#dcdde0;color:#4a4c55;font-size:9px;letter-spacing:-0.3px;-webkit-text-stroke:0.1px currentColor;line-height:16.6px;text-align:center;white-space:nowrap">RSI</div>
<div class="a" style="left:818.8px;top:80.3px;width:29.7px;height:16.6px;background:#dcdde0;color:#4a4c55;font-size:9px;letter-spacing:-0.3px;-webkit-text-stroke:0.1px currentColor;line-height:16.6px;text-align:center;white-space:nowrap">STO</div>
<div class="a" style="left:678.8px;top:98.2px;width:24.5px;height:16.6px;background:#eff0f2;color:#4a4c55;font-size:9px;letter-spacing:-0.3px;-webkit-text-stroke:0.1px currentColor;line-height:16.6px;text-align:center;white-space:nowrap">D</div>
<div class="a" style="left:704.6px;top:98.2px;width:24.6px;height:16.6px;background:#eff0f2;color:#4caf50;font-size:9px;letter-spacing:-0.3px;-webkit-text-stroke:0.1px currentColor;line-height:16.6px;text-align:center;white-space:nowrap"><svg width="8" height="7" viewBox="0 0 8 7" style="position:static;display:inline-block;vertical-align:middle"><path d="M0.5 6.5 L4 0.5 L7.5 6.5Z" fill="#4caf50"/></svg></div>
<div class="a" style="left:730.5px;top:98.2px;width:29.7px;height:16.6px;background:#eff0f2;color:#4caf50;font-size:9px;letter-spacing:-0.3px;-webkit-text-stroke:0.1px currentColor;line-height:16.6px;text-align:center;white-space:nowrap">14.5</div>
<div class="a" style="left:761.5px;top:98.2px;width:23.9px;height:16.6px;background:#eff0f2;color:#4caf50;font-size:9px;letter-spacing:-0.3px;-webkit-text-stroke:0.1px currentColor;line-height:16.6px;text-align:center;white-space:nowrap"><svg width="8" height="7" viewBox="0 0 8 7" style="position:static;display:inline-block;vertical-align:middle"><path d="M0.5 6.5 L4 0.5 L7.5 6.5Z" fill="#4caf50"/></svg></div>
<div class="a" style="left:786.7px;top:98.2px;width:30.8px;height:16.6px;background:#eff0f2;color:#4caf50;font-size:9px;letter-spacing:-0.3px;-webkit-text-stroke:0.1px currentColor;line-height:16.6px;text-align:center;white-space:nowrap">OB 77</div>
<div class="a" style="left:818.8px;top:98.2px;width:29.7px;height:16.6px;background:#eff0f2;color:#4caf50;font-size:9px;letter-spacing:-0.3px;-webkit-text-stroke:0.1px currentColor;line-height:16.6px;text-align:center;white-space:nowrap">OB 90</div>
<div class="a" style="left:678.8px;top:116.1px;width:24.5px;height:16.4px;background:#eff0f2;color:#4a4c55;font-size:9px;letter-spacing:-0.3px;-webkit-text-stroke:0.1px currentColor;line-height:16.4px;text-align:center;white-space:nowrap">4h</div>
<div class="a" style="left:704.6px;top:116.1px;width:24.6px;height:16.4px;background:#eff0f2;color:#4caf50;font-size:9px;letter-spacing:-0.3px;-webkit-text-stroke:0.1px currentColor;line-height:16.4px;text-align:center;white-space:nowrap"><svg width="8" height="7" viewBox="0 0 8 7" style="position:static;display:inline-block;vertical-align:middle"><path d="M0.5 6.5 L4 0.5 L7.5 6.5Z" fill="#4caf50"/></svg></div>
<div class="a" style="left:730.5px;top:116.1px;width:29.7px;height:16.4px;background:#eff0f2;color:#e5434f;font-size:9px;letter-spacing:-0.3px;-webkit-text-stroke:0.1px currentColor;line-height:16.4px;text-align:center;white-space:nowrap">-3.03</div>
<div class="a" style="left:761.5px;top:116.1px;width:23.9px;height:16.4px;background:#eff0f2;color:#f7a21b;font-size:9px;letter-spacing:-0.3px;-webkit-text-stroke:0.1px currentColor;line-height:16.4px;text-align:center;white-space:nowrap"><span style="display:inline-block;width:4.5px;height:4.5px;background:#f7a21b;vertical-align:middle"></span></div>
<div class="a" style="left:786.7px;top:116.1px;width:30.8px;height:16.4px;background:#eff0f2;color:#4caf50;font-size:9px;letter-spacing:-0.3px;-webkit-text-stroke:0.1px currentColor;line-height:16.4px;text-align:center;white-space:nowrap">57</div>
<div class="a" style="left:818.8px;top:116.1px;width:29.7px;height:16.4px;background:#eff0f2;color:#f7a21b;font-size:9px;letter-spacing:-0.3px;-webkit-text-stroke:0.1px currentColor;line-height:16.4px;text-align:center;white-space:nowrap">71</div>
<div class="a" style="left:678.8px;top:133.8px;width:24.5px;height:16.6px;background:#b8dfb8;color:#4a4c55;font-size:9px;letter-spacing:-0.3px;-webkit-text-stroke:0.1px currentColor;line-height:16.6px;text-align:center;white-space:nowrap">1h</div>
<div class="a" style="left:704.6px;top:133.8px;width:24.6px;height:16.6px;background:#b8dfb8;color:#f7a21b;font-size:9px;letter-spacing:-0.3px;-webkit-text-stroke:0.1px currentColor;line-height:16.6px;text-align:center;white-space:nowrap"><span style="display:inline-block;width:4.5px;height:4.5px;background:#f7a21b;vertical-align:middle"></span></div>
<div class="a" style="left:730.5px;top:133.8px;width:29.7px;height:16.6px;background:#b8dfb8;color:#4caf50;font-size:9px;letter-spacing:-0.3px;-webkit-text-stroke:0.1px currentColor;line-height:16.6px;text-align:center;white-space:nowrap">0.02</div>
<div class="a" style="left:761.5px;top:133.8px;width:23.9px;height:16.6px;background:#b8dfb8;color:#f7a21b;font-size:9px;letter-spacing:-0.3px;-webkit-text-stroke:0.1px currentColor;line-height:16.6px;text-align:center;white-space:nowrap"><span style="display:inline-block;width:4.5px;height:4.5px;background:#f7a21b;vertical-align:middle"></span></div>
<div class="a" style="left:786.7px;top:133.8px;width:30.8px;height:16.6px;background:#b8dfb8;color:#f7a21b;font-size:9px;letter-spacing:-0.3px;-webkit-text-stroke:0.1px currentColor;line-height:16.6px;text-align:center;white-space:nowrap">51</div>
<div class="a" style="left:818.8px;top:133.8px;width:29.7px;height:16.6px;background:#b8dfb8;color:#4caf50;font-size:9px;letter-spacing:-0.3px;-webkit-text-stroke:0.1px currentColor;line-height:16.6px;text-align:center;white-space:nowrap">OB 86</div>
<div class="a" style="left:678.8px;top:151.7px;width:24.5px;height:16.7px;background:#eff0f2;color:#4a4c55;font-size:9px;letter-spacing:-0.3px;-webkit-text-stroke:0.1px currentColor;line-height:16.7px;text-align:center;white-space:nowrap">15m</div>
<div class="a" style="left:704.6px;top:151.7px;width:24.6px;height:16.7px;background:#eff0f2;color:#f7a21b;font-size:9px;letter-spacing:-0.3px;-webkit-text-stroke:0.1px currentColor;line-height:16.7px;text-align:center;white-space:nowrap"><span style="display:inline-block;width:4.5px;height:4.5px;background:#f7a21b;vertical-align:middle"></span></div>
<div class="a" style="left:730.5px;top:151.7px;width:29.7px;height:16.7px;background:#eff0f2;color:#4caf50;font-size:9px;letter-spacing:-0.3px;-webkit-text-stroke:0.1px currentColor;line-height:16.7px;text-align:center;white-space:nowrap">0.37</div>
<div class="a" style="left:761.5px;top:151.7px;width:23.9px;height:16.7px;background:#eff0f2;color:#f7a21b;font-size:9px;letter-spacing:-0.3px;-webkit-text-stroke:0.1px currentColor;line-height:16.7px;text-align:center;white-space:nowrap"><span style="display:inline-block;width:4.5px;height:4.5px;background:#f7a21b;vertical-align:middle"></span></div>
<div class="a" style="left:786.7px;top:151.7px;width:30.8px;height:16.7px;background:#eff0f2;color:#f7a21b;font-size:9px;letter-spacing:-0.3px;-webkit-text-stroke:0.1px currentColor;line-height:16.7px;text-align:center;white-space:nowrap">53</div>
<div class="a" style="left:818.8px;top:151.7px;width:29.7px;height:16.7px;background:#eff0f2;color:#4caf50;font-size:9px;letter-spacing:-0.3px;-webkit-text-stroke:0.1px currentColor;line-height:16.7px;text-align:center;white-space:nowrap">OB 82</div>
<div class="a" style="left:678.8px;top:169.7px;width:24.5px;height:16.3px;background:#eff0f2;color:#4a4c55;font-size:9px;letter-spacing:-0.3px;-webkit-text-stroke:0.1px currentColor;line-height:16.3px;text-align:center;white-space:nowrap">5m</div>
<div class="a" style="left:704.6px;top:169.7px;width:24.6px;height:16.3px;background:#eff0f2;color:#f7a21b;font-size:9px;letter-spacing:-0.3px;-webkit-text-stroke:0.1px currentColor;line-height:16.3px;text-align:center;white-space:nowrap"><span style="display:inline-block;width:4.5px;height:4.5px;background:#f7a21b;vertical-align:middle"></span></div>
<div class="a" style="left:730.5px;top:169.7px;width:29.7px;height:16.3px;background:#eff0f2;color:#4caf50;font-size:9px;letter-spacing:-0.3px;-webkit-text-stroke:0.1px currentColor;line-height:16.3px;text-align:center;white-space:nowrap">0.46</div>
<div class="a" style="left:761.5px;top:169.7px;width:23.9px;height:16.3px;background:#eff0f2;color:#f7a21b;font-size:9px;letter-spacing:-0.3px;-webkit-text-stroke:0.1px currentColor;line-height:16.3px;text-align:center;white-space:nowrap"><span style="display:inline-block;width:4.5px;height:4.5px;background:#f7a21b;vertical-align:middle"></span></div>
<div class="a" style="left:786.7px;top:169.7px;width:30.8px;height:16.3px;background:#eff0f2;color:#4caf50;font-size:9px;letter-spacing:-0.3px;-webkit-text-stroke:0.1px currentColor;line-height:16.3px;text-align:center;white-space:nowrap">55</div>
<div class="a" style="left:818.8px;top:169.7px;width:29.7px;height:16.3px;background:#eff0f2;color:#f7a21b;font-size:9px;letter-spacing:-0.3px;-webkit-text-stroke:0.1px currentColor;line-height:16.3px;text-align:center;white-space:nowrap">78</div>
<div class="a" style="left:678.8px;top:187.3px;width:24.5px;height:14.9px;background:#eff0f2;color:#4a4c55;font-size:9px;letter-spacing:-0.3px;-webkit-text-stroke:0.1px currentColor;line-height:14.9px;text-align:center;white-space:nowrap">1m</div>
<div class="a" style="left:704.6px;top:187.3px;width:24.6px;height:14.9px;background:#eff0f2;color:#4caf50;font-size:9px;letter-spacing:-0.3px;-webkit-text-stroke:0.1px currentColor;line-height:14.9px;text-align:center;white-space:nowrap"><svg width="8" height="7" viewBox="0 0 8 7" style="position:static;display:inline-block;vertical-align:middle"><path d="M0.5 6.5 L4 0.5 L7.5 6.5Z" fill="#4caf50"/></svg></div>
<div class="a" style="left:730.5px;top:187.3px;width:29.7px;height:14.9px;background:#eff0f2;color:#e5434f;font-size:9px;letter-spacing:-0.3px;-webkit-text-stroke:0.1px currentColor;line-height:14.9px;text-align:center;white-space:nowrap">-0.32</div>
<div class="a" style="left:761.5px;top:187.3px;width:23.9px;height:14.9px;background:#eff0f2;color:#e5434f;font-size:9px;letter-spacing:-0.3px;-webkit-text-stroke:0.1px currentColor;line-height:14.9px;text-align:center;white-space:nowrap"><svg width="8" height="7" viewBox="0 0 8 7" style="position:static;display:inline-block;vertical-align:middle"><path d="M0.5 0.5 L4 6.5 L7.5 0.5Z" fill="#e5434f"/></svg></div>
<div class="a" style="left:786.7px;top:187.3px;width:30.8px;height:14.9px;background:#eff0f2;color:#e5434f;font-size:9px;letter-spacing:-0.3px;-webkit-text-stroke:0.1px currentColor;line-height:14.9px;text-align:center;white-space:nowrap">44</div>
<div class="a" style="left:818.8px;top:187.3px;width:29.7px;height:14.9px;background:#eff0f2;color:#e5434f;font-size:9px;letter-spacing:-0.3px;-webkit-text-stroke:0.1px currentColor;line-height:14.9px;text-align:center;white-space:nowrap">OS 6</div>
<div class="a" style="left:861px;top:74.5px;width:52px;height:23px;border:1px solid #3a3a3a;border-radius:5px;background:#0a0a0a"></div>
<div class="t" style="left:865.2px;top:80.8px;font-size:12px;color:#f0f0f0;-webkit-text-stroke:0.3px #f0f0f0;transform:scaleX(0.8);transform-origin:0 0">USD</div>
<svg width="8" height="5" style="left:902.5px;top:84.5px" viewBox="0 0 8 5"><path d="M1 1 L4 4 L7 1" fill="none" stroke="#e0e0e0" stroke-width="1.2"/></svg>
<div class="t" style="left:866px;top:104px;font-size:10.6px;color:#9598a1">3,380.00</div>
<div class="t" style="left:866px;top:141.5px;font-size:10.6px;color:#9598a1">3,360.00</div>
<div class="t" style="left:866px;top:178.5px;font-size:10.6px;color:#9598a1">3,340.00</div>


<!-- editor -->
<div class="a" style="left:50px;top:215px;width:866.5px;height:339px;background:#0f0f0f;border-top-left-radius:5px;border-top-right-radius:5px"></div>
<div class="a" style="left:0;top:553px;width:960px;height:1px;background:#5a5a5a"></div>
<div class="a" style="left:55.2px;top:216.5px;width:78.2px;height:30.2px;border-radius:6px;background:#383838"></div>
<div class="t" style="left:64.3px;top:224.8px;font-size:13.2px;color:#e8e8e8;transform:scaleX(0.938);transform-origin:0 0;-webkit-text-stroke:0.35px #e8e8e8;">Pine Editor</div>
<div class="t" style="left:153.2px;top:224.8px;font-size:13.2px;color:#e8e8e8;transform:scaleX(0.939);transform-origin:0 0;-webkit-text-stroke:0.35px #e8e8e8;">Strategy Tester</div>
<div class="t" style="left:265.6px;top:224.8px;font-size:13.2px;color:#e8e8e8;transform:scaleX(0.920);transform-origin:0 0;-webkit-text-stroke:0.35px #e8e8e8;">Replay Trading</div>
<div class="t" style="left:375.6px;top:224.8px;font-size:13.2px;color:#e8e8e8;transform:scaleX(0.909);transform-origin:0 0;-webkit-text-stroke:0.35px #e8e8e8;">Trading Panel</div>
<div class="a" style="left:861px;top:236.8px;width:13px;height:1.4px;background:#dbdbdb"></div>
<svg width="18" height="18" style="left:891px;top:223px" viewBox="0 0 18 18"><path d="M1.5 5.5 V4 A2.5 2.5 0 0 1 4 1.5 H13.5 A2.5 2.5 0 0 1 16 4 V5.5 M1.5 11 V13 A2.5 2.5 0 0 0 4 15.5 H13.5 A2.5 2.5 0 0 0 16 13 V11" stroke="#dbdbdb" stroke-width="1.2" fill="none"/></svg>
<div class="a" style="left:50px;top:248.2px;width:866px;height:2px;background:#252525"></div>
<svg width="18" height="10" style="left:62px;top:265.5px" viewBox="0 0 18 10"><path d="M1 7.5 C3 4 5 2.5 7 4.5 C9 7 11 7.5 12.5 5.5 L16.5 1.5" stroke="#dbdbdb" stroke-width="1.2" fill="none" stroke-width="1.4"/></svg>
<div class="t" style="left:90.6px;top:264.5px;font-size:13.3px;font-weight:bold;color:#ececec;transform:scaleX(0.937);transform-origin:0 0;">[JinNita] Indicator Table</div>
<svg width="10" height="6" style="left:243.5px;top:268.3px" viewBox="0 0 10 6"><path d="M1 1 L4.5 4.3 L8 1" fill="none" stroke="#c8c8c8" stroke-width="1.1"/></svg>
<svg width="20" height="20" style="left:268px;top:261px" viewBox="0 0 20 20"><path d="M3.51 5.83 A7.3 7.3 0 0 1 16.93 8.68 M15.89 13.57 A7.3 7.3 0 0 1 2.47 10.72 M18.52 6.14 L16.93 8.68 L14.7 6.67 M0.88 13.26 L2.47 10.72 L4.7 12.73" fill="none" stroke="#5c5c5c" stroke-width="1.2" stroke-linejoin="round"/></svg>
<div class="t" style="left:293.7px;top:264.3px;font-size:13.5px;color:#6b6b6b;transform:scaleX(0.937);transform-origin:0 0;-webkit-text-stroke:0.35px #6b6b6b;">Update on chart</div>
<div class="a" style="left:761px;top:258px;width:115px;height:25.5px;border-radius:13px;border:1.5px solid #e6e6e6;background:#000"></div>
<div class="t" style="left:771.9px;top:264.2px;font-size:13px;color:#f0f0f0;transform:scaleX(0.973);transform-origin:0 0;-webkit-text-stroke:0.45px #f0f0f0;">Publish indicator</div>
<svg width="20" height="6" style="left:886.5px;top:268px" viewBox="0 0 20 6"><circle cx="3" cy="3" r="2.1" stroke="#dbdbdb" stroke-width="1.2" fill="none"/><circle cx="9.8" cy="3" r="2.1" stroke="#dbdbdb" stroke-width="1.2" fill="none"/><circle cx="16.6" cy="3" r="2.1" stroke="#dbdbdb" stroke-width="1.2" fill="none"/></svg>
<div class="a" style="left:50px;top:291.8px;width:866px;height:1.8px;background:#252525"></div>
<div class="a" style="left:512.6px;top:444px;width:32.7px;height:48px;background:#4b4b4b"></div>
<div class="t" style="left:74.7px;top:303.7px;font-size:10.6px;font-family:'Liberation Mono',monospace;color:#868686;letter-spacing:-0.015px;-webkit-text-stroke:0.25px currentColor;">1</div>
<div class="t" style="left:107.0px;top:303.7px;font-size:10.6px;font-family:'Liberation Mono',monospace;color:#d6d6d6;letter-spacing:-0.015px;-webkit-text-stroke:0.25px currentColor;"><span style="color:#8c8c8c">//@version=6</span></div>
<div class="t" style="left:74.7px;top:319.7px;font-size:10.6px;font-family:'Liberation Mono',monospace;color:#868686;letter-spacing:-0.015px;-webkit-text-stroke:0.25px currentColor;">2</div>
<div class="t" style="left:107.0px;top:319.7px;font-size:10.6px;font-family:'Liberation Mono',monospace;color:#d6d6d6;letter-spacing:-0.015px;-webkit-text-stroke:0.25px currentColor;"><span style="color:#5b95e6">indicator</span><span style="color:#d6d6d6">(</span><span style="color:#4f9f52">&quot;[JinNita]&nbsp;Indicator&nbsp;Table&quot;</span><span style="color:#2fa596">,</span><span style="color:#d6d6d6">&nbsp;overlay&nbsp;</span><span style="color:#2fa596">=</span><span style="color:#d6d6d6">&nbsp;</span><span style="color:#e06666">true</span><span style="color:#d6d6d6">)</span></div>
<div class="t" style="left:74.7px;top:335.7px;font-size:10.6px;font-family:'Liberation Mono',monospace;color:#868686;letter-spacing:-0.015px;-webkit-text-stroke:0.25px currentColor;">3</div>
<div class="t" style="left:74.7px;top:351.7px;font-size:10.6px;font-family:'Liberation Mono',monospace;color:#868686;letter-spacing:-0.015px;-webkit-text-stroke:0.25px currentColor;">4</div>
<div class="t" style="left:107.0px;top:351.7px;font-size:10.6px;font-family:'Liberation Mono',monospace;color:#d6d6d6;letter-spacing:-0.015px;-webkit-text-stroke:0.25px currentColor;"><span style="color:#8c8c8c">//------------------------------------------------------------------------------</span></div>
<div class="t" style="left:74.7px;top:367.7px;font-size:10.6px;font-family:'Liberation Mono',monospace;color:#868686;letter-spacing:-0.015px;-webkit-text-stroke:0.25px currentColor;">5</div>
<div class="t" style="left:107.0px;top:367.7px;font-size:10.6px;font-family:'Liberation Mono',monospace;color:#d6d6d6;letter-spacing:-0.015px;-webkit-text-stroke:0.25px currentColor;"><span style="color:#8c8c8c">//&nbsp;Indicator&nbsp;Settings</span></div>
<div class="t" style="left:74.7px;top:383.7px;font-size:10.6px;font-family:'Liberation Mono',monospace;color:#868686;letter-spacing:-0.015px;-webkit-text-stroke:0.25px currentColor;">6</div>
<div class="t" style="left:107.0px;top:383.7px;font-size:10.6px;font-family:'Liberation Mono',monospace;color:#d6d6d6;letter-spacing:-0.015px;-webkit-text-stroke:0.25px currentColor;"><span style="color:#8c8c8c">//------------------------------------------------------------------------------</span></div>
<div class="t" style="left:74.7px;top:399.7px;font-size:10.6px;font-family:'Liberation Mono',monospace;color:#868686;letter-spacing:-0.015px;-webkit-text-stroke:0.25px currentColor;">7</div>
<div class="t" style="left:74.7px;top:415.7px;font-size:10.6px;font-family:'Liberation Mono',monospace;color:#868686;letter-spacing:-0.015px;-webkit-text-stroke:0.25px currentColor;">8</div>
<div class="t" style="left:107.0px;top:415.7px;font-size:10.6px;font-family:'Liberation Mono',monospace;color:#d6d6d6;letter-spacing:-0.015px;-webkit-text-stroke:0.25px currentColor;"><span style="color:#8c8c8c">//===========================&nbsp;EMA&nbsp;==========================</span></div>
<div class="t" style="left:74.7px;top:431.7px;font-size:10.6px;font-family:'Liberation Mono',monospace;color:#868686;letter-spacing:-0.015px;-webkit-text-stroke:0.25px currentColor;">9</div>
<div class="t" style="left:107.0px;top:431.7px;font-size:10.6px;font-family:'Liberation Mono',monospace;color:#d6d6d6;letter-spacing:-0.015px;-webkit-text-stroke:0.25px currentColor;"><span style="color:#d6d6d6">EMAGP&nbsp;&nbsp;&nbsp;</span><span style="color:#2fa596">=</span><span style="color:#d6d6d6">&nbsp;</span><span style="color:#4f9f52">&quot;EMA&nbsp;Settings&quot;</span></div>
<div class="t" style="left:68.3px;top:447.7px;font-size:10.6px;font-family:'Liberation Mono',monospace;color:#868686;letter-spacing:-0.015px;-webkit-text-stroke:0.25px currentColor;">10</div>
<div class="t" style="left:107.0px;top:447.7px;font-size:10.6px;font-family:'Liberation Mono',monospace;color:#d6d6d6;letter-spacing:-0.015px;-webkit-text-stroke:0.25px currentColor;"><span style="color:#d6d6d6">emaShortLen&nbsp;&nbsp;&nbsp;&nbsp;</span><span style="color:#2fa596">=</span><span style="color:#d6d6d6">&nbsp;</span><span style="color:#5b95e6">input.int</span><span style="color:#d6d6d6">(</span><span style="color:#ee8c35">50</span><span style="color:#2fa596">,</span><span style="color:#d6d6d6">&nbsp;&nbsp;</span><span style="color:#4f9f52">&quot;EMA&nbsp;Short&nbsp;Length&quot;</span><span style="color:#2fa596">,</span><span style="color:#d6d6d6">&nbsp;minval&nbsp;</span><span style="color:#2fa596">=</span><span style="color:#d6d6d6">&nbsp;</span><span style="color:#ee8c35">1</span><span style="color:#2fa596">,</span><span style="color:#d6d6d6">&nbsp;group&nbsp;</span><span style="color:#2fa596">=</span><span style="color:#d6d6d6">&nbsp;EMAGP)</span></div>
<div class="t" style="left:68.3px;top:463.7px;font-size:10.6px;font-family:'Liberation Mono',monospace;color:#868686;letter-spacing:-0.015px;-webkit-text-stroke:0.25px currentColor;">11</div>
<div class="t" style="left:107.0px;top:463.7px;font-size:10.6px;font-family:'Liberation Mono',monospace;color:#d6d6d6;letter-spacing:-0.015px;-webkit-text-stroke:0.25px currentColor;"><span style="color:#d6d6d6">emaMidLen&nbsp;&nbsp;&nbsp;&nbsp;&nbsp;&nbsp;</span><span style="color:#2fa596">=</span><span style="color:#d6d6d6">&nbsp;</span><span style="color:#5b95e6">input.int</span><span style="color:#d6d6d6">(</span><span style="color:#ee8c35">100</span><span style="color:#2fa596">,</span><span style="color:#d6d6d6">&nbsp;</span><span style="color:#4f9f52">&quot;EMA&nbsp;Mid&nbsp;Length&quot;</span><span style="color:#2fa596">,</span><span style="color:#d6d6d6">&nbsp;&nbsp;&nbsp;minval&nbsp;</span><span style="color:#2fa596">=</span><span style="color:#d6d6d6">&nbsp;</span><span style="color:#ee8c35">1</span><span style="color:#2fa596">,</span><span style="color:#d6d6d6">&nbsp;group&nbsp;</span><span style="color:#2fa596">=</span><span style="color:#d6d6d6">&nbsp;EMAGP)</span></div>
<div class="t" style="left:68.3px;top:479.7px;font-size:10.6px;font-family:'Liberation Mono',monospace;color:#868686;letter-spacing:-0.015px;-webkit-text-stroke:0.25px currentColor;">12</div>
<div class="t" style="left:107.0px;top:479.7px;font-size:10.6px;font-family:'Liberation Mono',monospace;color:#d6d6d6;letter-spacing:-0.015px;-webkit-text-stroke:0.25px currentColor;"><span style="color:#d6d6d6">emaLongLen&nbsp;&nbsp;&nbsp;&nbsp;&nbsp;</span><span style="color:#2fa596">=</span><span style="color:#d6d6d6">&nbsp;</span><span style="color:#5b95e6">input.int</span><span style="color:#d6d6d6">(</span><span style="color:#ee8c35">200</span><span style="color:#2fa596">,</span><span style="color:#d6d6d6">&nbsp;</span><span style="color:#4f9f52">&quot;EMA&nbsp;Long&nbsp;Length&quot;</span><span style="color:#2fa596">,</span><span style="color:#d6d6d6">&nbsp;&nbsp;minval&nbsp;</span><span style="color:#2fa596">=</span><span style="color:#d6d6d6">&nbsp;</span><span style="color:#ee8c35">1</span><span style="color:#2fa596">,</span><span style="color:#d6d6d6">&nbsp;group&nbsp;</span><span style="color:#2fa596">=</span><span style="color:#d6d6d6">&nbsp;EMAGP)</span></div>
<div class="t" style="left:68.3px;top:495.7px;font-size:10.6px;font-family:'Liberation Mono',monospace;color:#868686;letter-spacing:-0.015px;-webkit-text-stroke:0.25px currentColor;">13</div>
<div class="a" style="left:50px;top:508.8px;width:866px;height:2.1px;background:#363636"></div>
<div class="t" style="left:56.0px;top:518.2px;font-size:10.6px;font-family:'Liberation Mono',monospace;color:#d6d6d6;letter-spacing:-0.015px;-webkit-text-stroke:0.25px currentColor;">9:25:49 AM Added to chart.</div>
<div class="a" style="left:912.3px;top:511px;width:1px;height:8px;background:#cfcfcf"></div>
<div class="a" style="left:912.3px;top:517.5px;width:3px;height:15px;background:#e6e6e6"></div>
<div class="a" style="left:50px;top:533.8px;width:866px;height:2.4px;background:#363636"></div>
<div class="a" style="left:57px;top:536px;width:30px;height:18px;background:#2b2b2b"></div>
<svg width="16" height="14" style="left:64.5px;top:538.5px" viewBox="0 0 16 14"><rect x="0.7" y="0.7" width="14" height="12.5" rx="2" fill="none" stroke="#9a9a9a" stroke-width="1.1"/><path d="M3.5 4 L6.5 6.8 L3.5 9.6 M8 10.5 H11.5" fill="none" stroke="#9a9a9a" stroke-width="1.1"/></svg>
<div class="t" style="left:635.6px;top:538.5px;font-size:12px;color:#d6d6d6;transform:scaleX(0.882);transform-origin:0 0;-webkit-text-stroke:0.3px #d6d6d6;">71 · Yesterday, 21:07</div>
<div class="t" style="left:749.0px;top:538.5px;font-size:12px;color:#d6d6d6;transform:scaleX(0.880);transform-origin:0 0;-webkit-text-stroke:0.3px #d6d6d6;">Line 18, Col 85</div>
<div class="t" style="left:835.0px;top:538.5px;font-size:12px;color:#d6d6d6;transform:scaleX(0.869);transform-origin:0 0;-webkit-text-stroke:0.3px #d6d6d6;">Pine Script® v6</div>
<svg width="960" height="554" style="left:0;top:0;pointer-events:none"><rect x="807.00" y="294.80" width="8.00" height="1.50" fill="#3d5a8f"/><rect x="817.00" y="294.80" width="23.00" height="1.50" fill="#3f7a45"/><rect x="842.00" y="294.80" width="6.00" height="1.50" fill="#8a8a8a"/><rect x="850.00" y="294.80" width="5.00" height="1.50" fill="#8a4444"/><rect x="807.00" y="298.00" width="71.00" height="1.00" fill="#3a3a3a"/><rect x="809.00" y="300.30" width="17.00" height="1.00" fill="#4a4a4a"/><rect x="807.00" y="302.20" width="71.00" height="1.00" fill="#3a3a3a"/><rect x="807.00" y="305.50" width="25.00" height="0.90" fill="#3c3c3c"/><rect x="834.00" y="305.00" width="3.00" height="1.70" fill="#6a6a6a"/><rect x="838.00" y="305.50" width="22.00" height="0.90" fill="#3c3c3c"/><rect x="807.00" y="307.10" width="4.50" height="1.40" fill="#a8a8a8"/><rect x="815.00" y="307.10" width="13.00" height="1.40" fill="#3d7a42"/><rect x="806.90" y="309.00" width="96.85" height="5.30" fill="#7a7a7a"/><rect x="807.00" y="309.50" width="12.00" height="4.30" fill="#929292"/><rect x="819.00" y="309.00" width="12.00" height="5.30" fill="#7f879a"/><rect x="831.00" y="309.00" width="2.50" height="5.30" fill="#9a8a76"/><rect x="834.00" y="309.30" width="18.00" height="4.70" fill="#7f8d80"/><rect x="853.00" y="309.50" width="7.00" height="4.30" fill="#a0a0a0"/><rect x="864.00" y="309.30" width="4.50" height="4.70" fill="#d0d0d0"/><rect x="871.00" y="309.80" width="5.00" height="3.70" fill="#b2b2b2"/><rect x="807.00" y="316.30" width="25.00" height="0.90" fill="#3c3c3c"/><rect x="834.00" y="315.80" width="3.00" height="1.70" fill="#6a6a6a"/><rect x="838.00" y="316.30" width="22.00" height="0.90" fill="#3c3c3c"/><rect x="807.00" y="317.90" width="4.50" height="1.40" fill="#a8a8a8"/><rect x="815.00" y="317.90" width="13.00" height="1.40" fill="#3d7a42"/><rect x="806.90" y="319.80" width="96.85" height="5.00" fill="#7a7a7a"/><rect x="807.00" y="320.30" width="12.00" height="4.00" fill="#929292"/><rect x="819.00" y="319.80" width="12.00" height="5.00" fill="#7f879a"/><rect x="831.00" y="319.80" width="2.50" height="5.00" fill="#9a8a76"/><rect x="834.00" y="320.10" width="18.00" height="4.40" fill="#7f8d80"/><rect x="853.00" y="320.30" width="7.00" height="4.00" fill="#a0a0a0"/><rect x="864.00" y="319.80" width="2.00" height="5.00" fill="#b88a50"/><rect x="867.00" y="319.80" width="5.00" height="2.00" fill="#d4d4d4"/><rect x="875.00" y="320.30" width="2.00" height="4.50" fill="#b88a50"/><rect x="880.00" y="321.30" width="4.00" height="3.00" fill="#d4d4d4"/><rect x="887.00" y="321.30" width="5.00" height="3.00" fill="#b0b0b0"/><rect x="820.00" y="323.30" width="40.00" height="1.50" fill="#2a2a2a" opacity="0.5"/><rect x="807.00" y="327.20" width="25.00" height="0.90" fill="#3c3c3c"/><rect x="834.00" y="326.70" width="3.00" height="1.70" fill="#6a6a6a"/><rect x="838.00" y="327.20" width="22.00" height="0.90" fill="#3c3c3c"/><rect x="807.00" y="328.80" width="4.50" height="1.40" fill="#a8a8a8"/><rect x="815.00" y="328.80" width="13.00" height="1.40" fill="#3d7a42"/><rect x="806.90" y="330.10" width="96.85" height="5.40" fill="#7a7a7a"/><rect x="807.00" y="330.60" width="12.00" height="4.40" fill="#929292"/><rect x="819.00" y="330.10" width="12.00" height="5.40" fill="#7f879a"/><rect x="831.00" y="330.10" width="2.50" height="5.40" fill="#9a8a76"/><rect x="834.00" y="330.40" width="18.00" height="4.80" fill="#7f8d80"/><rect x="853.00" y="330.60" width="7.00" height="4.40" fill="#a0a0a0"/><rect x="866.00" y="330.40" width="5.00" height="4.80" fill="#d0d0d0"/><rect x="874.00" y="330.90" width="7.00" height="3.80" fill="#b2b2b2"/><rect x="807.00" y="337.80" width="25.00" height="0.90" fill="#3c3c3c"/><rect x="834.00" y="337.30" width="3.00" height="1.70" fill="#6a6a6a"/><rect x="838.00" y="337.80" width="30.00" height="0.90" fill="#3c3c3c"/><rect x="807.00" y="339.40" width="4.50" height="1.40" fill="#a8a8a8"/><rect x="815.00" y="339.40" width="13.00" height="1.40" fill="#3d7a42"/><rect x="806.90" y="340.80" width="96.85" height="5.20" fill="#7a7a7a"/><rect x="807.00" y="341.30" width="12.00" height="4.20" fill="#929292"/><rect x="819.00" y="340.80" width="12.00" height="5.20" fill="#7f879a"/><rect x="831.00" y="340.80" width="2.50" height="5.20" fill="#9a8a76"/><rect x="834.00" y="341.10" width="18.00" height="4.60" fill="#7f8d80"/><rect x="853.00" y="341.30" width="7.00" height="4.20" fill="#a0a0a0"/><rect x="858.00" y="341.10" width="3.00" height="4.60" fill="#9a8a76"/><rect x="862.00" y="341.10" width="4.50" height="4.60" fill="#d0d0d0"/><rect x="869.00" y="341.60" width="5.00" height="3.60" fill="#b2b2b2"/><rect x="807.00" y="348.80" width="25.00" height="0.90" fill="#3c3c3c"/><rect x="834.00" y="348.30" width="3.00" height="1.70" fill="#6a6a6a"/><rect x="838.00" y="348.80" width="30.00" height="0.90" fill="#3c3c3c"/><rect x="807.00" y="350.40" width="4.50" height="1.40" fill="#a8a8a8"/><rect x="815.00" y="350.40" width="13.00" height="1.40" fill="#3d7a42"/><rect x="806.90" y="351.90" width="96.85" height="8.40" fill="#7a7a7a"/><rect x="807.00" y="352.40" width="12.00" height="7.40" fill="#929292"/><rect x="819.00" y="351.90" width="12.00" height="8.40" fill="#7f879a"/><rect x="831.00" y="351.90" width="2.50" height="8.40" fill="#9a8a76"/><rect x="834.00" y="352.20" width="18.00" height="7.80" fill="#7f8d80"/><rect x="853.00" y="352.40" width="7.00" height="7.40" fill="#a0a0a0"/><rect x="861.00" y="351.90" width="6.00" height="5.00" fill="#d4d4d4"/><rect x="862.00" y="353.90" width="5.00" height="5.40" fill="#9a8a76" opacity="0.6"/><rect x="870.00" y="353.90" width="6.00" height="5.40" fill="#b0b0b0"/><rect x="877.00" y="356.80" width="5.00" height="2.50" fill="#d4d4d4"/><rect x="884.00" y="356.80" width="6.00" height="2.50" fill="#b0b0b0"/><rect x="807.00" y="362.60" width="25.00" height="0.90" fill="#3c3c3c"/><rect x="834.00" y="362.10" width="3.00" height="1.70" fill="#6a6a6a"/><rect x="838.00" y="362.60" width="30.00" height="0.90" fill="#3c3c3c"/><rect x="807.00" y="364.20" width="4.50" height="1.40" fill="#a8a8a8"/><rect x="815.00" y="364.20" width="13.00" height="1.40" fill="#3d7a42"/><rect x="806.90" y="365.60" width="96.85" height="12.20" fill="#7a7a7a"/><rect x="807.00" y="366.10" width="12.00" height="11.20" fill="#929292"/><rect x="819.00" y="365.60" width="12.00" height="12.20" fill="#7f879a"/><rect x="831.00" y="365.60" width="2.50" height="12.20" fill="#9a8a76"/><rect x="834.00" y="365.90" width="18.00" height="11.60" fill="#7f8d80"/><rect x="853.00" y="366.10" width="7.00" height="11.20" fill="#a0a0a0"/><rect x="834.00" y="365.60" width="7.00" height="12.20" fill="#7f879a"/><rect x="841.00" y="365.60" width="7.00" height="12.20" fill="#937a7a"/><rect x="848.00" y="367.60" width="10.00" height="9.20" fill="#728a72"/><rect x="858.00" y="366.10" width="3.00" height="11.20" fill="#9a8a76"/><rect x="855.00" y="370.60" width="9.00" height="4.00" fill="#d4d4d4"/><rect x="862.00" y="366.60" width="13.00" height="7.00" fill="#8a9a8a"/><rect x="875.00" y="366.10" width="5.00" height="2.50" fill="#d4d4d4"/><rect x="882.00" y="366.60" width="13.00" height="2.00" fill="#b0b0b0"/><rect x="870.00" y="375.80" width="5.00" height="1.50" fill="#d4d4d4"/><rect x="807.00" y="380.30" width="96.75" height="3.20" fill="#6f7f70"/><rect x="807.00" y="380.60" width="23.00" height="2.60" fill="#9a9a9a"/><rect x="806.90" y="386.50" width="8.10" height="1.50" fill="#3d5a8f"/><rect x="818.00" y="386.80" width="5.00" height="1.00" fill="#3a3a3a"/><rect x="834.00" y="386.80" width="31.00" height="1.00" fill="#3a3a3a"/><rect x="812.00" y="388.50" width="2.00" height="1.20" fill="#8a8a8a"/><rect x="816.90" y="388.50" width="9.10" height="1.20" fill="#386e3c"/><rect x="833.80" y="388.50" width="12.20" height="1.20" fill="#8a4444"/><rect x="812.00" y="390.40" width="2.00" height="1.20" fill="#8a8a8a"/><rect x="816.90" y="390.40" width="10.10" height="1.20" fill="#386e3c"/><rect x="833.80" y="390.40" width="13.70" height="1.20" fill="#8a4444"/><rect x="812.00" y="392.30" width="2.00" height="1.20" fill="#8a8a8a"/><rect x="816.90" y="392.30" width="11.10" height="1.20" fill="#386e3c"/><rect x="833.80" y="392.30" width="15.20" height="1.20" fill="#8a4444"/><rect x="812.00" y="394.20" width="2.00" height="1.20" fill="#8a8a8a"/><rect x="816.90" y="394.20" width="9.10" height="1.20" fill="#386e3c"/><rect x="833.80" y="394.20" width="16.70" height="1.20" fill="#8a4444"/><rect x="812.00" y="396.10" width="2.00" height="1.20" fill="#8a8a8a"/><rect x="816.90" y="396.10" width="10.10" height="1.20" fill="#386e3c"/><rect x="833.80" y="396.10" width="12.20" height="1.20" fill="#8a4444"/><rect x="812.00" y="398.00" width="2.00" height="1.20" fill="#8a8a8a"/><rect x="816.90" y="398.00" width="11.10" height="1.20" fill="#386e3c"/><rect x="833.80" y="398.00" width="13.70" height="1.20" fill="#8a4444"/><rect x="812.00" y="399.90" width="2.00" height="1.20" fill="#8a8a8a"/><rect x="816.90" y="399.90" width="9.10" height="1.20" fill="#386e3c"/><rect x="833.80" y="399.90" width="15.20" height="1.20" fill="#8a4444"/><rect x="812.00" y="401.80" width="2.00" height="1.20" fill="#8a8a8a"/><rect x="816.90" y="401.80" width="10.10" height="1.20" fill="#386e3c"/><rect x="833.80" y="401.80" width="16.70" height="1.20" fill="#8a4444"/><rect x="806.90" y="405.50" width="8.10" height="1.50" fill="#3d5a8f"/><rect x="812.00" y="407.50" width="2.00" height="1.20" fill="#8a8a8a"/><rect x="816.90" y="407.50" width="6.10" height="1.20" fill="#386e3c"/><rect x="826.00" y="407.50" width="10.00" height="1.20" fill="#8a4444"/><rect x="812.00" y="409.40" width="2.00" height="1.20" fill="#8a8a8a"/><rect x="816.90" y="409.40" width="6.10" height="1.20" fill="#386e3c"/><rect x="826.00" y="409.40" width="10.00" height="1.20" fill="#8a4444"/><rect x="812.00" y="411.30" width="2.00" height="1.20" fill="#8a8a8a"/><rect x="816.90" y="411.30" width="6.10" height="1.20" fill="#386e3c"/><rect x="826.00" y="411.30" width="10.00" height="1.20" fill="#8a4444"/><rect x="812.00" y="413.20" width="2.00" height="1.20" fill="#8a8a8a"/><rect x="816.90" y="413.20" width="6.10" height="1.20" fill="#386e3c"/><rect x="826.00" y="413.20" width="10.00" height="1.20" fill="#8a4444"/><rect x="812.00" y="415.10" width="2.00" height="1.20" fill="#8a8a8a"/><rect x="816.90" y="415.10" width="6.10" height="1.20" fill="#386e3c"/><rect x="826.00" y="415.10" width="10.00" height="1.20" fill="#8a4444"/><rect x="807.00" y="419.00" width="15.00" height="1.00" fill="#3d5a8f"/><rect x="811.00" y="421.00" width="21.00" height="1.00" fill="#6a6a6a"/><rect x="811.00" y="423.00" width="15.00" height="1.00" fill="#6a6a6a"/><rect x="807.00" y="428.00" width="15.00" height="1.00" fill="#3d5a8f"/><rect x="811.00" y="430.00" width="29.00" height="1.00" fill="#6a6a6a"/><rect x="811.00" y="432.00" width="25.00" height="1.00" fill="#6a6a6a"/><rect x="815.00" y="432.00" width="2.00" height="1.00" fill="#a8743a"/><rect x="811.00" y="434.50" width="19.00" height="1.00" fill="#6a6a6a"/><rect x="811.00" y="436.50" width="15.00" height="1.00" fill="#6a6a6a"/><rect x="807.00" y="440.00" width="15.00" height="1.00" fill="#3d5a8f"/><rect x="811.00" y="442.00" width="29.00" height="1.00" fill="#6a6a6a"/><rect x="811.00" y="444.00" width="25.00" height="1.00" fill="#6a6a6a"/><rect x="811.00" y="446.00" width="15.00" height="1.00" fill="#6a6a6a"/><rect x="807.00" y="449.50" width="15.00" height="1.00" fill="#3d5a8f"/><rect x="811.00" y="451.00" width="3.00" height="1.00" fill="#6a6a6a"/><rect x="816.50" y="451.00" width="6.50" height="1.00" fill="#386e3c"/><rect x="826.00" y="451.00" width="16.00" height="1.00" fill="#8a4444"/><rect x="843.00" y="451.00" width="9.00" height="1.00" fill="#386e3c"/><rect x="811.00" y="452.80" width="3.00" height="1.00" fill="#6a6a6a"/><rect x="816.50" y="452.80" width="6.50" height="1.00" fill="#386e3c"/><rect x="826.00" y="452.80" width="16.00" height="1.00" fill="#8a4444"/><rect x="843.00" y="452.80" width="9.00" height="1.00" fill="#386e3c"/><rect x="811.00" y="454.60" width="3.00" height="1.00" fill="#6a6a6a"/><rect x="816.50" y="454.60" width="6.50" height="1.00" fill="#386e3c"/><rect x="826.00" y="454.60" width="16.00" height="1.00" fill="#8a4444"/><rect x="843.00" y="454.60" width="9.00" height="1.00" fill="#386e3c"/><rect x="811.00" y="456.40" width="3.00" height="1.00" fill="#6a6a6a"/><rect x="816.50" y="456.40" width="6.50" height="1.00" fill="#386e3c"/><rect x="826.00" y="456.40" width="16.00" height="1.00" fill="#8a4444"/><rect x="843.00" y="456.40" width="9.00" height="1.00" fill="#386e3c"/><rect x="811.00" y="458.20" width="3.00" height="1.00" fill="#6a6a6a"/><rect x="816.50" y="458.20" width="6.50" height="1.00" fill="#386e3c"/><rect x="826.00" y="458.20" width="16.00" height="1.00" fill="#8a4444"/><rect x="843.00" y="458.20" width="9.00" height="1.00" fill="#386e3c"/><rect x="811.00" y="460.00" width="3.00" height="1.00" fill="#6a6a6a"/><rect x="816.50" y="460.00" width="6.50" height="1.00" fill="#386e3c"/><rect x="826.00" y="460.00" width="16.00" height="1.00" fill="#8a4444"/><rect x="843.00" y="460.00" width="9.00" height="1.00" fill="#386e3c"/><rect x="852.00" y="460.50" width="26.00" height="1.00" fill="#5a5a5a"/><rect x="807.00" y="463.70" width="23.00" height="1.00" fill="#3d5a8f"/><rect x="811.00" y="465.50" width="41.00" height="1.00" fill="#3d5a8f"/><rect x="818.00" y="467.50" width="34.00" height="1.00" fill="#4a5f85"/><rect x="813.00" y="469.50" width="21.00" height="1.00" fill="#4a5f85"/><rect x="807.00" y="472.50" width="16.00" height="1.00" fill="#3d5a8f"/><rect x="811.00" y="474.50" width="55.00" height="1.00" fill="#6a6a6a"/><rect x="814.00" y="476.50" width="48.00" height="1.00" fill="#6a6a6a"/><rect x="811.00" y="478.50" width="11.00" height="1.00" fill="#6a6a6a"/><rect x="807.00" y="483.50" width="35.00" height="1.00" fill="#3d5a8f"/><rect x="830.00" y="483.50" width="12.00" height="1.00" fill="#a8743a"/><rect x="807.00" y="487.20" width="55.00" height="1.00" fill="#4a4a4a"/><rect x="807.00" y="488.70" width="15.00" height="1.00" fill="#3d5a8f"/><rect x="811.00" y="490.50" width="6.00" height="1.00" fill="#6a6a6a"/><rect x="818.00" y="490.50" width="10.00" height="1.00" fill="#4a5f85"/><rect x="830.00" y="490.50" width="12.00" height="1.00" fill="#6a6a6a"/><rect x="811.00" y="492.30" width="6.00" height="1.00" fill="#6a6a6a"/><rect x="818.00" y="492.30" width="10.00" height="1.00" fill="#4a5f85"/><rect x="830.00" y="492.30" width="12.00" height="1.00" fill="#6a6a6a"/><rect x="811.00" y="494.10" width="6.00" height="1.00" fill="#6a6a6a"/><rect x="818.00" y="494.10" width="10.00" height="1.00" fill="#4a5f85"/><rect x="830.00" y="494.10" width="12.00" height="1.00" fill="#6a6a6a"/><rect x="811.00" y="495.90" width="6.00" height="1.00" fill="#6a6a6a"/><rect x="818.00" y="495.90" width="10.00" height="1.00" fill="#8a4444"/><rect x="830.00" y="495.90" width="12.00" height="1.00" fill="#6a6a6a"/><rect x="811.00" y="497.70" width="6.00" height="1.00" fill="#6a6a6a"/><rect x="818.00" y="497.70" width="10.00" height="1.00" fill="#8a4444"/><rect x="830.00" y="497.70" width="12.00" height="1.00" fill="#5a5a5a"/><rect x="842.00" y="498.50" width="24.00" height="1.00" fill="#6a6a6a"/><rect x="811.00" y="502.00" width="61.00" height="1.00" fill="#6a6a6a"/><rect x="811.00" y="504.00" width="41.00" height="1.00" fill="#6a6a6a"/><rect x="811.00" y="506.00" width="31.00" height="1.00" fill="#6a6a6a"/><rect x="904.50" y="293.00" width="0.70" height="216.00" fill="#2c2c2c"/><rect x="905.20" y="302.00" width="5.00" height="5.00" fill="#8a8a8a"/><rect x="905.20" y="309.00" width="5.00" height="11.50" fill="#8a8a8a"/><rect x="905.20" y="322.00" width="5.00" height="5.60" fill="#8a8a8a"/><rect x="905.20" y="330.00" width="5.00" height="5.80" fill="#8a8a8a"/><rect x="905.20" y="339.20" width="5.00" height="12.10" fill="#8a8a8a"/><rect x="910.00" y="311.80" width="6.00" height="1.00" fill="#cfcfcf"/></svg>
<!-- right sidebar -->
<div class="a" style="left:920px;top:71px;width:38px;height:483px;background:#0f0f0f;border-top-left-radius:6px;border-bottom-right-radius:8px"></div>
<div class="a" style="left:958.3px;top:8px;width:1.7px;height:546px;background:linear-gradient(to bottom,#a0a0a0 0,#a0a0a0 214px,#1c2232 215px,#1c2232 262px,#8a8a8a 263px,#8a8a8a 412px,#1a1f2c 413px)"></div>
<!-- RIGHT SIDEBAR ICONS -->
<svg width="22" height="22" style="left:930px;top:81.5px" viewBox="0 0 22 22"><path d="M1.5 1.5 H19.5 V20.5 L10.5 15.5 L1.5 20.5Z" stroke="#dbdbdb" stroke-width="1.2" fill="none" stroke-linejoin="round"/><path d="M5.5 6 H15.5 M5.5 9.5 H15.5 M5.5 13 H15.5" stroke="#dbdbdb" stroke-width="1.2" fill="none"/></svg>
<svg width="24" height="24" style="left:928px;top:120px" viewBox="0 0 24 24"><circle cx="13" cy="13.8" r="9.3" stroke="#dbdbdb" stroke-width="1.2" fill="none"/><path d="M13.5 7.5 V14.5 H8.5" stroke="#dbdbdb" stroke-width="1.2" fill="none"/><path d="M1.5 6.8 L6.5 1.8" stroke="#dbdbdb" stroke-width="1.2" fill="none"/></svg>
<div class="a" style="left:936px;top:114.3px;width:22px;height:15.7px;border-radius:8px;background:#e8343f;border:2px solid #0f0f0f"></div>
<div class="t" style="left:941.2px;top:117.6px;font-size:10.5px;font-weight:bold;color:#fff;letter-spacing:-0.3px">16</div>
<svg width="24" height="20" style="left:929px;top:164px" viewBox="0 0 24 20"><path d="M12 1.5 L22 7.5 L12 13 L2 7.5Z" stroke="#dbdbdb" stroke-width="1.2" fill="none" stroke-linejoin="round"/><path d="M2 12 L12 17.5 L22 12" stroke="#dbdbdb" stroke-width="1.2" fill="none" stroke-linejoin="round"/></svg>
<svg width="24" height="24" style="left:929px;top:204px" viewBox="0 0 24 24"><path d="M1 2.5 A1.5 1.5 0 0 1 2.5 1 H15.5 A1.5 1.5 0 0 1 17 2.5 V12.5 A1.5 1.5 0 0 1 15.5 14 H5 L1 17.5Z" stroke="#dbdbdb" stroke-width="1.2" fill="none" stroke-linejoin="round"/><path d="M17 7 H20.5 A1.5 1.5 0 0 1 22 8.5 V21.5 L18.5 18.5 H8.5 A1.5 1.5 0 0 1 7 17 V14" stroke="#dbdbdb" stroke-width="1.2" fill="none" stroke-linejoin="round"/></svg>
<svg width="28" height="28" style="left:927px;top:346px" viewBox="0 0 28 28"><circle cx="14" cy="13.5" r="12.3" stroke="#dbdbdb" stroke-width="1.2" fill="none"/><circle cx="14" cy="13.5" r="6.5" stroke="#dbdbdb" stroke-width="1.2" fill="none"/><circle cx="14" cy="13.5" r="1.6" fill="#dbdbdb"/><path d="M14 13.5 L21 6.5" stroke="#dbdbdb" stroke-width="1.2" fill="none"/></svg>
<svg width="24" height="24" style="left:929px;top:388.5px" viewBox="0 0 24 24"><rect x="1.5" y="4" width="20" height="18" rx="2.5" stroke="#dbdbdb" stroke-width="1.2" fill="none"/><path d="M1.5 9.5 H21.5" stroke="#dbdbdb" stroke-width="1.2" fill="none"/><rect x="5.5" y="1.5" width="3" height="5" rx="1" fill="#0f0f0f" stroke="#dbdbdb" stroke-width="1.1"/><rect x="14.5" y="1.5" width="3" height="5" rx="1" fill="#0f0f0f" stroke="#dbdbdb" stroke-width="1.1"/></svg>
<div class="a" style="left:925px;top:426px;width:30px;height:30px;border-radius:50%;background:#ececec"></div>
<svg width="16" height="16" style="left:932px;top:433px" viewBox="0 0 16 16"><rect x="1" y="1" width="3.6" height="3.6" rx="0.6" fill="#131313"/><rect x="6.2" y="1" width="3.6" height="3.6" rx="0.6" fill="#131313"/><rect x="11.4" y="1" width="3.6" height="3.6" rx="0.6" fill="#131313"/><rect x="1" y="6.2" width="3.6" height="3.6" rx="0.6" fill="#131313"/><rect x="6.2" y="6.2" width="3.6" height="3.6" rx="0.6" fill="#131313"/><rect x="11.4" y="6.2" width="3.6" height="3.6" rx="0.6" fill="#131313"/><rect x="1" y="11.4" width="3.6" height="3.6" rx="0.6" fill="#131313"/><rect x="6.2" y="11.4" width="3.6" height="3.6" rx="0.6" fill="#131313"/><rect x="11.4" y="11.4" width="3.6" height="3.6" rx="0.6" fill="#131313"/></svg>
<div class="a" style="left:925px;top:466px;width:30px;height:1px;background:#3a3a3a"></div>
<svg width="24" height="24" style="left:929px;top:479px" viewBox="0 0 24 24"><circle cx="3.5" cy="20" r="1.6" stroke="#dbdbdb" stroke-width="1.2" fill="none"/><path d="M2 12.5 A9 9 0 0 1 11 21.5 M2 7 A14.5 14.5 0 0 1 16.5 21.5 M2 1.5 A20 20 0 0 1 22 21.5" stroke="#dbdbdb" stroke-width="1.2" fill="none"/></svg>
<div class="a" style="left:937px;top:474px;width:20px;height:16.5px;border-radius:8.5px;background:#e8343f;border:2px solid #0f0f0f"></div>
<div class="t" style="left:940.5px;top:477px;font-size:10px;font-weight:bold;color:#fff;letter-spacing:-0.3px">44</div>
<svg width="30" height="30" style="left:926px;top:518px" viewBox="0 0 30 30"><path d="M25.05 10.31 A12 12 0 0 1 6.13 24.06 M2.31 17.70 A12 12 0 0 1 19.26 4.21" fill="none" stroke="#dbdbdb" stroke-width="1.2"/><path d="M10.6 12.2 A3.7 3.7 0 1 1 14.4 15.6 V17.8" fill="none" stroke="#dbdbdb" stroke-width="1.2"/><circle cx="14.4" cy="20.8" r="0.9" fill="#dbdbdb"/><path d="M23.8 2.1 Q25.060000000000002 4.44 27.400000000000002 5.7 Q25.060000000000002 6.96 23.8 9.3 Q22.54 6.96 20.2 5.7 Q22.54 4.44 23.8 2.1Z M4.2 17.9 Q5.25 19.849999999999998 7.2 20.9 Q5.25 21.95 4.2 23.9 Q3.1500000000000004 21.95 1.2000000000000002 20.9 Q3.1500000000000004 19.849999999999998 4.2 17.9Z" fill="none" stroke="#dbdbdb" stroke-width="1.1" stroke-linejoin="round"/></svg>


<!-- END -->
</body></html>
